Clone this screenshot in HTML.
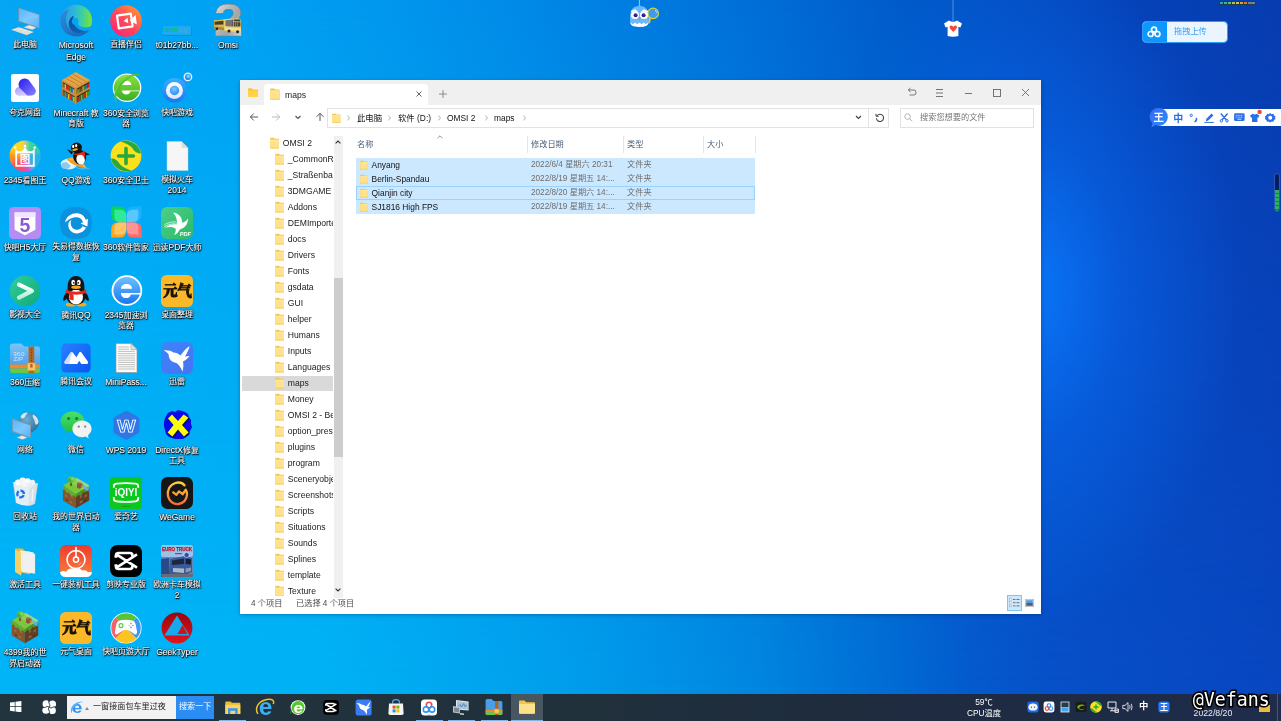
<!DOCTYPE html>
<html lang="zh-CN"><head><meta charset="utf-8"><title>desktop</title>
<style>
*{box-sizing:border-box;margin:0;padding:0}
html,body{width:1281px;height:721px;overflow:hidden}
body{position:relative;font-family:"Liberation Sans","Noto Sans CJK SC",sans-serif;font-size:8px;color:#000;
 background:#0a50c8;}
#bg{position:absolute;left:0;top:0;width:1281px;height:721px;
 background:linear-gradient(90deg,#06a6f4 0%,#00a2f4 18.7%,#0096ee 31%,#008ae8 40.6%,#007ce0 50%,#006ed8 59.3%,#005ecc 68.7%,#0450c4 78%,#0642b8 89%,#083cb0 100%);}
#bg2{position:absolute;left:0;top:0;width:1281px;height:721px;
 background:linear-gradient(90deg,#00b4f7 0%,#00b2f5 25%,#009eec 44%,#0086e0 59%,#006cd4 69.5%,#045acc 75.8%,#0650c8 82%,#0846c0 100%);
 -webkit-mask-image:linear-gradient(180deg,rgba(0,0,0,0) 0%,rgba(0,0,0,.55) 40%,rgba(0,0,0,1) 95%);mask-image:linear-gradient(180deg,rgba(0,0,0,0) 0%,rgba(0,0,0,.55) 40%,rgba(0,0,0,1) 95%);}
#bg3{position:absolute;left:0;top:0;width:1281px;height:721px;
 background:radial-gradient(ellipse 210px 340px at 1030px 290px, rgba(10,124,255,.85), rgba(10,112,250,.4) 45%, rgba(10,100,240,0) 100%);}
#root{position:absolute;left:0;top:0;width:1281px;height:721px;overflow:hidden;opacity:.999}
.abs{position:absolute}
.di{position:absolute;width:60px;text-align:center;color:#fff;font-size:7.95px;line-height:10.5px;-webkit-text-stroke:.1px #fff;
 text-shadow:0 0 .8px rgba(0,0,0,1),0 0 1.2px rgba(0,0,0,.9),0.6px 0.8px 1px rgba(0,0,0,1),0.5px 0.7px 2px rgba(0,0,0,.7);}
.di i{font-style:normal;font-size:8.5px}
.di svg{text-shadow:none;-webkit-text-stroke:0;display:block;margin:0 auto 3.2px;width:32px;height:32px;overflow:visible}
#win{position:absolute;left:240px;top:80px;width:801px;height:534px;background:#fff;
 box-shadow:0 1px 4px rgba(0,0,40,.28);}
#tb{position:absolute;left:0;top:0;width:801px;height:25px;background:#f0f0f0}
#tab{position:absolute;left:24px;top:4px;width:164px;height:21px;background:#fff;border-radius:4px 4px 0 0}
.t{position:absolute;white-space:nowrap;line-height:10px}
.g{color:#6d6d6d}
#task{position:absolute;left:0;top:693px;width:1281px;height:28px}
#taskbg{position:absolute;left:0;top:.8px;width:1281px;height:27.2px;background:linear-gradient(90deg,#22343e 0%,#21313b 42%,#1e2c3e 65%,#1e2b44 82%,#1f2c4b 100%)}
</style></head>
<body>
<div id="root">
<div id="bg"></div><div id="bg2"></div><div id="bg3"></div>
<div class="di" style="left:-5.0px;top:4.9px"><svg viewBox="0 0 32 32" width="32" height="32"><defs><linearGradient id="pcg" x1="0" y1="0" x2="1" y2="1"><stop offset="0" stop-color="#58b6ff"/><stop offset=".5" stop-color="#7cc8ff"/><stop offset="1" stop-color="#58b4fc"/></linearGradient></defs><path d="M14.5 22.2L20.5 20L27.2 22.5L23.4 24.8Z" fill="#ece8e0" stroke="#b8a898" stroke-width=".3"/><path d="M9.4 2.5L30.5 9.4V23.3L9.4 16.5Z" fill="#8e949c"/><path d="M10.1 3.6L29.8 10V22.2L10.1 15.8Z" fill="url(#pcg)"/><path d="M10.1 15.8L29.8 10V12L10.1 15.8Z" fill="#9adcff" opacity=".35"/><path d="M2.3 24.8L9.7 22.2L24.6 27L17.5 30Z" fill="#eeebe6" stroke="#c0b4a8" stroke-width=".3"/><path d="M4.6 24.9L19.6 29.2M7 24L22 28.2M6 25.8L11 23.4M10.4 27L15.4 24.6M14.8 28.4L19.8 26" stroke="#d0c8be" stroke-width=".45"/></svg>此电脑</div>
<div class="di" style="left:46.0px;top:4.9px"><svg viewBox="0 0 32 32" width="32" height="32"><defs><linearGradient id="eg1" x1=".05" y1=".4" x2=".95" y2=".45"><stop offset="0" stop-color="#2a9ae0"/><stop offset=".4" stop-color="#2cb6dc"/><stop offset=".72" stop-color="#3fd0a0"/><stop offset="1" stop-color="#74e23c"/></linearGradient><linearGradient id="eg2" x1="0" y1="0" x2="1" y2="1"><stop offset="0" stop-color="#2a8edc"/><stop offset="1" stop-color="#1262ba"/></linearGradient><linearGradient id="eg3" x1="0" y1="0" x2="1" y2="1"><stop offset="0" stop-color="#0c4c9c"/><stop offset="1" stop-color="#1468bc"/></linearGradient><mask id="egm"><rect x="-2" y="-2" width="36" height="36" fill="#fff"/><circle cx="15.2" cy="16.4" r="3.3" fill="#000"/><path d="M15.4 17C16 21.4 20 24 25 24.2C28 24.2 31 23.4 33.4 21.6" fill="none" stroke="#000" stroke-width="3.4"/></mask></defs><g mask="url(#egm)"><circle cx="16.2" cy="15.6" r="15.9" fill="url(#eg1)"/><path d="M.3 16C.3 10 4 6 9 4.6C4.6 10 5 20 10 24.4C15 28.6 24 28.6 30.6 23.4C27 29 21 31.6 16 31.6C7 31.6 .3 24.6 .3 16Z" fill="url(#eg2)"/><path d="M13.6 10.4C8.4 13 7 20.4 11 25C15.4 29.6 24.4 29 30.6 23.4C25 26 19.6 25 16.4 21.8C13.4 18.8 12.8 14.4 13.6 10.4Z" fill="url(#eg3)"/></g></svg><i>Microsoft</i><br><i>Edge</i></div>
<div class="di" style="left:96.0px;top:4.9px"><svg viewBox="0 0 32 32" width="32" height="32"><defs><linearGradient id="zb" x1=".15" y1=".9" x2=".85" y2=".1"><stop offset="0" stop-color="#ff2470"/><stop offset=".5" stop-color="#ff4a5c"/><stop offset="1" stop-color="#ff9036"/></linearGradient></defs><circle cx="16" cy="16" r="15.8" fill="url(#zb)"/><path d="M7 10.6L20.8 8.6L22.6 21.4L8.8 23.4Z" fill="none" stroke="#fff" stroke-width="2.2" stroke-linejoin="round"/><path d="M25.6 10L26.8 19.4L19.6 15.6Z" fill="#fff"/><path d="M17.6 12.8L18.3 18.2L13.6 16Z" fill="#fff"/></svg>直播伴侣</div>
<div class="di" style="left:147.0px;top:4.9px"><svg viewBox="0 0 32 32" width="32" height="32"><rect x="2.2" y="21" width="28.2" height="9.2" fill="rgba(120,200,250,.22)"/><path d="M2.2 30.4H30.6V21" fill="none" stroke="rgba(20,90,170,.45)" stroke-width=".7"/><text x="3" y="27" font-family="Liberation Sans,sans-serif" font-weight="bold" font-size="5.8" fill="#10c060" textLength="13.6" lengthAdjust="spacingAndGlyphs">360</text><text x="17.2" y="26.8" font-family="Liberation Sans,Noto Sans CJK SC,sans-serif" font-size="4.8" fill="#5aa6d0" textLength="10.6" lengthAdjust="spacingAndGlyphs">导航</text></svg><i>t01b27bb...</i></div>
<div class="di" style="left:198.0px;top:4.9px"><svg viewBox="0 0 32 32" width="32" height="32"><defs><linearGradient id="om" x1="0" y1="0" x2="1" y2="1"><stop offset="0" stop-color="#f0f0f0"/><stop offset=".35" stop-color="#bdbdbd"/><stop offset=".6" stop-color="#a4a4a4"/><stop offset="1" stop-color="#ececec"/></linearGradient></defs><text x="16.6" y="31.4" text-anchor="middle" font-family="Liberation Sans,sans-serif" font-weight="bold" font-size="46.5" fill="url(#om)" stroke="#7a7a7a" stroke-width=".4" textLength="30" lengthAdjust="spacingAndGlyphs">2</text><path d="M2 15.6L12 14.4L13 14L27 13.4L29 14.4V27L27 27.6L13 26L12 25.4L2 23.6Z" fill="#e6cf74"/><path d="M2 15.6L12 14.4V25.4L2 23.6Z" fill="#d8b84a"/><path d="M2.6 16.8L11.4 15.8V19.6L2.6 19.8Z" fill="#4a3c24"/><path d="M13.6 15.2L21 14.8V21.6L13.6 21Z" fill="#5a5a6a"/><path d="M15 15.2V21.2M17 15.1V21.3M19 15V21.4" stroke="#c8b070" stroke-width=".6"/><path d="M21.6 14.6L28.4 14.6V16.4L21.6 16.2Z" fill="#2a4a2a"/><path d="M21.6 17L28.4 17.2V21.6L21.6 21.6Z" fill="#4a4438"/><path d="M23.4 17.1V21.6M25.4 17.1V21.6" stroke="#c8a858" stroke-width=".6"/><path d="M13 22.6L29 23.4V25.6L13 24.4Z" fill="#f2e29a"/><path d="M2 21.4L12 22.6V25.4L2 23.6Z" fill="#a8883a"/><circle cx="17" cy="26" r="1.5" fill="#222"/><circle cx="25.6" cy="26.8" r="1.5" fill="#222"/><circle cx="5" cy="23.8" r="1.2" fill="#222"/></svg><i>Omsi</i></div>
<div class="di" style="left:-5.0px;top:72.4px"><svg viewBox="0 0 32 32" width="32" height="32"><defs><linearGradient id="qk" gradientUnits="userSpaceOnUse" x1="10" y1="8" x2="26" y2="24"><stop offset="0" stop-color="#2a22f0"/><stop offset=".5" stop-color="#5a50fa"/><stop offset="1" stop-color="#8a84ff"/></linearGradient><linearGradient id="qk2" x1="0" y1="0" x2="1" y2="1"><stop offset="0" stop-color="#a49cff"/><stop offset="1" stop-color="#e6e2ff"/></linearGradient></defs><rect x="2" y="2" width="28" height="28" rx="2.2" fill="#fff"/><path d="M10.3 15.1A4.3 4.3 0 0 0 10.3 23.7H22V15.1Z" fill="url(#qk2)"/><path d="M10.2 15.6A6.1 6.1 0 0 1 21 9.8L25.8 16.2A4.5 4.5 0 0 1 22.3 23.6L18.4 23.6Z" fill="url(#qk)"/></svg>夸克网盘</div>
<div class="di" style="left:46.0px;top:72.4px"><svg viewBox="0 0 32 32" width="32" height="32"><path d="M15.8 -.1L29.9 8.1L15.8 15.9L2.1 8.1Z" fill="#e6a648"/><path d="M5.5 6L19.4 14M9 4L22.9 12M12.4 2L26.4 10" stroke="#b87828" stroke-width=".8"/><path d="M2.1 8.1L15.8 15.9V31.4L2.1 23.3Z" fill="#c88a3a"/><path d="M29.9 8.1L15.8 15.9V31.4L29.9 23.3Z" fill="#a8702c"/><path d="M2.9 10.1L15 17V22.6L2.9 15.7Z" fill="#4a2c14"/><path d="M2.9 17.7L15 24.6V30.2L2.9 23.3Z" fill="#4a2c14"/><path d="M29.1 10.1L16.6 17V22.6L29.1 15.7Z" fill="#3a2210"/><path d="M29.1 17.7L16.6 24.6V30.2L29.1 23.3Z" fill="#3a2210"/><path d="M3.6 11.4V16.4" stroke="#2e8a4a" stroke-width="1.6"/><path d="M5.3 12.3V17.3" stroke="#d8c030" stroke-width="1.6"/><path d="M7.0 13.3V18.3" stroke="#e02a22" stroke-width="1.6"/><path d="M8.8 14.3V19.3" stroke="#e02a22" stroke-width="1.6"/><path d="M10.5 15.3V20.3" stroke="#2eaa4a" stroke-width="1.6"/><path d="M12.2 16.2V21.2" stroke="#3a6ad0" stroke-width="1.6"/><path d="M13.9 17.2V22.2" stroke="#d8c030" stroke-width="1.6"/><path d="M3.6 19.0V24.0" stroke="#e02a22" stroke-width="1.6"/><path d="M5.3 19.9V24.9" stroke="#2eaa4a" stroke-width="1.6"/><path d="M7.0 20.9V25.9" stroke="#3a6ad0" stroke-width="1.6"/><path d="M8.8 21.9V26.9" stroke="#d8c030" stroke-width="1.6"/><path d="M10.5 22.9V27.9" stroke="#e02a22" stroke-width="1.6"/><path d="M12.2 23.8V28.8" stroke="#2e8a4a" stroke-width="1.6"/><path d="M13.9 24.8V29.8" stroke="#d8c030" stroke-width="1.6"/><path d="M28.3 11.4V16.4" stroke="#c82a22" stroke-width="1.6"/><path d="M26.6 12.4V17.4" stroke="#2e6ac0" stroke-width="1.6"/><path d="M24.9 13.4V18.4" stroke="#2e9a3a" stroke-width="1.6"/><path d="M23.1 14.3V19.3" stroke="#b8a828" stroke-width="1.6"/><path d="M21.4 15.3V20.3" stroke="#c82a22" stroke-width="1.6"/><path d="M19.7 16.3V21.3" stroke="#2e8a3a" stroke-width="1.6"/><path d="M18.0 17.3V22.3" stroke="#88a828" stroke-width="1.6"/><path d="M28.3 19.0V24.0" stroke="#2e9a3a" stroke-width="1.6"/><path d="M26.6 20.0V25.0" stroke="#b8a828" stroke-width="1.6"/><path d="M24.9 21.0V26.0" stroke="#c82a22" stroke-width="1.6"/><path d="M23.1 21.9V26.9" stroke="#2e8a3a" stroke-width="1.6"/><path d="M21.4 22.9V27.9" stroke="#88a828" stroke-width="1.6"/><path d="M19.7 23.9V28.9" stroke="#2e7a3a" stroke-width="1.6"/><path d="M18.0 24.9V29.9" stroke="#c82a22" stroke-width="1.6"/><path d="M2.1 15.7L15.8 23.5L29.9 15.7" fill="none" stroke="#c88a3a" stroke-width="1.5"/><path d="M15.8 15.9V31.4" stroke="#d8963e" stroke-width="1.2"/><path d="M2.1 8.1L15.8 15.9L29.9 8.1" fill="none" stroke="#d8963e" stroke-width="1.4"/></svg><i>Minecraft</i> 教<br>育版</div>
<div class="di" style="left:96.0px;top:72.4px"><svg viewBox="0 0 32 32" width="32" height="32"><defs><linearGradient id="se" x1="0" y1="0" x2="0" y2="1"><stop offset="0" stop-color="#8ee240"/><stop offset="1" stop-color="#3aae22"/></linearGradient></defs><circle cx="17" cy="15.7" r="14.3" fill="#fff"/><circle cx="17" cy="15.7" r="13.1" fill="url(#se)"/><path d="M12 13C12 10.2 14 8.8 16.6 8.8C19.4 8.8 21.3 10.4 21.3 13Z" fill="#fff"/><path d="M11.7 18.4H29.6V19.3H20.4C20 21.4 18.4 22.6 16.4 22.6C14 22.6 12.2 21 11.9 19.3Z" fill="#fff"/><path d="M6.4 30.8C1 24 7 7.6 22 2.6C26 1.2 30 1.4 30.4 4.2C28 2.6 25 3 22 4.6C11 10.4 5 22 6.4 30.8Z" fill="#4cc42c"/><path d="M5.6 20C8 12 14 6 22 3.4" fill="none" stroke="#9ae860" stroke-width=".7" opacity=".8"/></svg><i>360</i>安全浏览<br>器</div>
<div class="di" style="left:147.0px;top:72.4px"><svg viewBox="0 0 32 32" width="32" height="32"><defs><linearGradient id="kb1" x1="0" y1="0" x2="0" y2="1"><stop offset="0" stop-color="#3cacff"/><stop offset="1" stop-color="#1a78ee"/></linearGradient><linearGradient id="kb2" x1="0" y1="0" x2="0" y2="1"><stop offset="0" stop-color="#4ab4ff"/><stop offset="1" stop-color="#2288f0"/></linearGradient><radialGradient id="kb3" cx=".45" cy=".35" r=".7"><stop offset="0" stop-color="#7cc8ff"/><stop offset="1" stop-color="#2488f4"/></radialGradient><linearGradient id="kb4" x1="0" y1="0" x2="0" y2="1"><stop offset="0" stop-color="#ffffff"/><stop offset="1" stop-color="#dce6f0"/></linearGradient></defs><path d="M20.4 8.6L24.4 5L27.4 8.4L24 12.6Z" fill="#2a94fa"/><circle cx="26.9" cy="4.9" r="4.4" fill="#eaf4fc"/><circle cx="26.9" cy="4.9" r="3.1" fill="url(#kb2)"/><circle cx="27.3" cy="4.4" r="1.3" fill="#8ad4ff"/><circle cx="13.4" cy="18.3" r="12.3" fill="url(#kb1)"/><circle cx="13.4" cy="18.6" r="8.5" fill="url(#kb4)"/><circle cx="13.5" cy="18.5" r="4.7" fill="url(#kb3)"/></svg>快吧游戏</div>
<div class="di" style="left:-5.0px;top:139.8px"><svg viewBox="0 0 32 32" width="32" height="32"><defs><clipPath id="pvc"><circle cx="16" cy="16" r="15.6"/></clipPath><filter id="pvb" x="-20%" y="-20%" width="140%" height="140%"><feGaussianBlur stdDeviation="2.6"/></filter></defs><g clip-path="url(#pvc)"><g filter="url(#pvb)"><rect x="-4" y="-4" width="40" height="40" fill="#ffd21e"/><path d="M16 16L16 -6L40 -6L40 16Z" fill="#3ed0a0"/><path d="M16 16L40 10L40 34L26 40Z" fill="#28b0ec"/><path d="M16 16L28 40L14 40Z" fill="#c850d0"/><path d="M16 16L14 40L-6 40L-6 26Z" fill="#ff4660"/><path d="M16 16L-6 28L-6 10Z" fill="#ff8a1e"/><path d="M16 16L-6 10L-6 -6L16 -6Z" fill="#ffd41e"/></g></g><path d="M6.4 8.4L9.2 11.4H13L16 7L19 11.4H22.8L25.6 8.4V12.6H6.4Z" fill="#fff"/><circle cx="6.4" cy="7.6" r="1.2" fill="#fff"/><circle cx="16" cy="6" r="1.3" fill="#fff"/><circle cx="25.6" cy="7.6" r="1.2" fill="#fff"/><rect x="7.2" y="12.4" width="17.6" height="13.4" fill="none" stroke="#fff" stroke-width="1.8"/><text x="16" y="23.4" text-anchor="middle" font-family="Noto Sans CJK SC,sans-serif" font-weight="bold" font-size="10.5" fill="#fff">图</text></svg><i>2345</i>看图王</div>
<div class="di" style="left:46.0px;top:139.8px"><svg viewBox="0 0 32 32" width="32" height="32"><ellipse cx="9" cy="24" rx="8.4" ry="5.4" fill="#dff1fb"/><ellipse cx="5.6" cy="25.6" rx="4.6" ry="3.4" fill="#8ccaf0"/><ellipse cx="11.6" cy="21.6" rx="4" ry="3.2" fill="#f4fbff"/><path d="M7 19.6C12 14.6 20 18 27.6 28.6C19 27.6 11 24.6 7 19.6Z" fill="#f0a028"/><path d="M9.6 19.8C14 17 20 20.6 25 27" fill="none" stroke="#ffd070" stroke-width="1"/><path d="M14 26.4C20 30.8 28 30 31.4 27.6C27 28.8 20 28.6 14 26.4Z" fill="#58b4ec"/><ellipse cx="19.6" cy="17" rx="6.4" ry="7.6" fill="#141414" transform="rotate(-14 19.6 17)"/><ellipse cx="20.6" cy="19.4" rx="4.2" ry="5.2" fill="#fff" transform="rotate(-14 20.6 19.4)"/><ellipse cx="16.4" cy="7.6" rx="5.6" ry="5" fill="#141414" transform="rotate(-14 16.4 7.6)"/><path d="M11.6 12.4C15 15 21.6 13.4 24 10.6L27.6 15.6L24.6 15.2L25 17.6L21.6 14.4C18 15.8 14 15.4 11.6 12.4Z" fill="#e8281e"/><path d="M7 9L13 12L11.4 14.4Z" fill="#141414"/><path d="M24.6 12L30 14.6L25.4 15.4Z" fill="#141414"/><ellipse cx="13.2" cy="6.4" rx="1.1" ry="1.6" fill="#fff"/><ellipse cx="16.2" cy="5.6" rx="1.1" ry="1.6" fill="#fff"/><ellipse cx="15" cy="9.6" rx="3" ry="1.2" fill="#f6a81e" transform="rotate(-10 15 9.6)"/></svg><i>QQ</i>游戏</div>
<div class="di" style="left:96.0px;top:139.8px"><svg viewBox="0 0 32 32" width="32" height="32"><circle cx="16" cy="16" r="15.4" fill="#fbe01e"/><path d="M10.6 1.6C19 -1.4 29.4 4 31 13.4C28.4 14 25 12.4 22.6 8.6C20.4 5.2 15 3 10.6 1.6Z" fill="#2aa83c"/><path d="M21.4 30.4C13 33.4 2.6 28 1 18.6C3.6 18 7 19.6 9.4 23.4C11.6 26.8 17 29 21.4 30.4Z" fill="#2aa83c"/><path d="M16 8.6V23.4M8.6 16H23.4" stroke="#2aa83c" stroke-width="3.6" stroke-linecap="round"/></svg><i>360</i>安全卫士</div>
<div class="di" style="left:147.0px;top:139.8px"><svg viewBox="0 0 32 32" width="32" height="32"><path d="M6 1.5H20.6L27 8V30.5H6Z" fill="#f6f6f6" stroke="#d0d0d0" stroke-width=".5"/><path d="M20.6 1.5V8H27Z" fill="#dcdcdc"/></svg>模拟火车<br><i>2014</i></div>
<div class="di" style="left:-5.0px;top:207.3px"><svg viewBox="0 0 32 32" width="32" height="32"><rect x="0" y="0" width="32" height="32" rx="4.5" fill="#b58cf4"/><path d="M5.6 5.4H26.4V22.8L16 28.2L5.6 22.8Z" fill="#fff"/><path d="M5.6 5.4H26.4V10H5.6Z" fill="#efe6ff"/><text x="16" y="24.6" text-anchor="middle" font-family="Liberation Sans,sans-serif" font-weight="bold" font-size="19.5" fill="#8a5ad6">5</text></svg>快吧<i>H5</i>大厅</div>
<div class="di" style="left:46.0px;top:207.3px"><svg viewBox="0 0 32 32" width="32" height="32"><path d="M16 0C27 0 32 5 32 16S27 32 16 32S0 27 0 16S5 0 16 0Z" fill="#0c92dc"/><path d="M5 15.6C6 9.6 11 6.2 16.4 6.2C21 6.2 24.6 8.8 25.8 12.8L28 12L27.4 19.4L20.6 16.4L23 15.2C22 12 19.6 10.2 16.4 10.2C11.6 10.2 8.6 12.6 5 15.6Z" fill="#fff"/><path d="M8.4 16.4C9 14.6 10 13.6 11.6 12.8C10.8 14 10.6 15.4 10.8 17C11.2 20.4 13.6 22.8 17 22.8C19.6 22.8 21.6 21.4 22.4 19.2L26 20.6C24.6 24 21.2 26.4 17 26.4C11.6 26.4 7.6 22 8.4 16.4Z" fill="#fff"/></svg>失易得数据恢<br>复</div>
<div class="di" style="left:96.0px;top:207.3px"><svg viewBox="0 0 32 32" width="32" height="32"><path d="M1.2 -.4H9.4Q16.2 -.4 16.2 7V15H8Q1.2 15 1.2 8Z" fill="#0ed25c"/><path d="M4.4 2.8H10Q16.2 2.8 16.2 9V15H10Q4.4 15 4.4 9.4Z" fill="#2deb96"/><path d="M31.6 -.4H23.4Q16.6 -.4 16.6 7V15H24.8Q31.6 15 31.6 8Z" fill="#18b0ff"/><path d="M28.4 2.8H22.8Q16.6 2.8 16.6 9V15H22.8Q28.4 15 28.4 9.4Z" fill="#58c8ff"/><path d="M1.2 30.6H9.4Q16.2 30.6 16.2 23.2V15.4H8Q1.2 15.4 1.2 22.2Z" fill="#ffa61e"/><path d="M4.4 27.4H10Q16.2 27.4 16.2 21.4V15.4H10Q4.4 15.4 4.4 21Z" fill="#ffc466"/><path d="M31.6 30.6H23.4Q16.6 30.6 16.6 23.2V15.4H24.8Q31.6 15.4 31.6 22.2Z" fill="#ff6a6a"/><path d="M28.4 27.4H22.8Q16.6 27.4 16.6 21.4V15.4H22.8Q28.4 15.4 28.4 21Z" fill="#ff9494"/></svg><i>360</i>软件管家</div>
<div class="di" style="left:147.0px;top:207.3px"><svg viewBox="0 0 32 32" width="32" height="32"><defs><linearGradient id="xd" x1="0" y1="0" x2="1" y2="1"><stop offset="0" stop-color="#4ad088"/><stop offset="1" stop-color="#2eb86a"/></linearGradient></defs><rect x="0" y="0" width="32" height="32" rx="6" fill="url(#xd)"/><path d="M12 5.6C18.6 6.6 21.4 11 21 15.6C23.6 15.4 25.6 14 27 11.6C27 17.6 23.6 21.6 18.8 22.4C17.6 25 15.6 27 13 28C14.6 25.6 15 23.6 14.6 21.6C11.6 20 9 19.4 4 21C8 17.6 12 17 15.4 17.4C16.6 13.6 15.6 9.6 12 5.6Z" fill="#fff"/><path d="M3.6 17.6C8 15.2 11.6 14.6 15 15M3 20C7 17.4 10.6 16.6 14.6 16.8" stroke="#fff" stroke-width=".7" fill="none"/><text x="24.4" y="28.8" text-anchor="middle" font-family="Liberation Sans,sans-serif" font-style="italic" font-weight="bold" font-size="5.6" fill="#fff">PDF</text></svg>迅读<i>PDF</i>大师</div>
<div class="di" style="left:-5.0px;top:274.7px"><svg viewBox="0 0 32 32" width="32" height="32"><defs><linearGradient id="ys" x1="0" y1="0" x2="1" y2="1"><stop offset="0" stop-color="#2ecf9c"/><stop offset="1" stop-color="#12a878"/></linearGradient><linearGradient id="ys2" x1="0" y1="0" x2="0" y2="1"><stop offset="0" stop-color="#ffffff"/><stop offset="1" stop-color="#b8f0d8"/></linearGradient></defs><circle cx="16" cy="16" r="15.2" fill="url(#ys)"/><path d="M10 9.6L23 15.8L10 22.6" fill="none" stroke="url(#ys2)" stroke-width="4.2" stroke-linecap="round" stroke-linejoin="round"/></svg>影视大全</div>
<div class="di" style="left:46.0px;top:274.7px"><svg viewBox="0 0 32 32" width="32" height="32"><path d="M6 18C3.6 21 2.6 24.6 3.6 26C5 26 7 23.6 8 21.6Z" fill="#141414"/><path d="M26 18C28.4 21 29.4 24.6 28.4 26C27 26 25 23.6 24 21.6Z" fill="#141414"/><ellipse cx="10.6" cy="29.4" rx="5" ry="2" fill="#f6a81e"/><ellipse cx="21.4" cy="29.4" rx="5" ry="2" fill="#f6a81e"/><ellipse cx="16" cy="20.6" rx="10" ry="9.4" fill="#141414"/><ellipse cx="16" cy="22" rx="7" ry="7.4" fill="#fff"/><path d="M7.6 12C7.6 5 11 1 16 1S24.4 5 24.4 12V15H7.6Z" fill="#141414"/><path d="M6 14.4C12 17.4 20 17.4 26 14.4L26.6 17.6C20 20.6 12 20.6 5.4 17.6Z" fill="#e8281e"/><path d="M9.6 18.6L13.6 19.6V25.4L9.6 24.6Z" fill="#e8281e"/><ellipse cx="13.2" cy="7.4" rx="1.9" ry="2.7" fill="#fff"/><ellipse cx="18.8" cy="7.4" rx="1.9" ry="2.7" fill="#fff"/><circle cx="13.8" cy="7.8" r=".9" fill="#141414"/><circle cx="18.2" cy="7.8" r=".9" fill="#141414"/><ellipse cx="16" cy="12.2" rx="4.8" ry="1.7" fill="#f6a81e"/></svg>腾讯<i>QQ</i></div>
<div class="di" style="left:96.0px;top:274.7px"><svg viewBox="0 0 32 32" width="32" height="32"><defs><linearGradient id="b2" x1="0" y1="0" x2="0" y2="1"><stop offset="0" stop-color="#6cc0ff"/><stop offset="1" stop-color="#1a78ee"/></linearGradient></defs><circle cx="16.9" cy="15.5" r="15.3" fill="#fff"/><circle cx="16.9" cy="15.5" r="13.5" fill="url(#b2)"/><path d="M11 13.8C11 10.6 13.4 9 16.6 9C19.8 9 22.1 10.8 22.1 13.8Z" fill="#fff"/><path d="M11 17.9H30.4V19.4H20.8C20.4 21.8 18.6 23.1 16.2 23.1C13.6 23.1 11.6 21.6 11.1 19.4Z" fill="#fff"/></svg><i>2345</i>加速浏<br>览器</div>
<div class="di" style="left:147.0px;top:274.7px"><svg viewBox="0 0 32 32" width="32" height="32"><rect x="0" y="0" width="32" height="32" rx="5.5" fill="#fbb92a"/><text x="16.4" y="21.2" text-anchor="middle" font-family="Noto Serif CJK SC,Noto Sans CJK SC,serif" font-weight="900" font-size="14.6" fill="#1c1408" stroke="#1c1408" stroke-width=".9" textLength="28.4" lengthAdjust="spacingAndGlyphs">元气</text></svg>桌面整理</div>
<div class="di" style="left:-5.0px;top:342.2px"><svg viewBox="0 0 32 32" width="32" height="32"><defs><linearGradient id="zp" x1="0" y1="0" x2="0" y2="1"><stop offset="0" stop-color="#7cc4f6"/><stop offset="1" stop-color="#3e94e6"/></linearGradient></defs><path d="M1 4Q1 1.4 3.6 1.4H12L15.4 4.6H28.6Q31 4.6 31 7V29Q31 31 28.6 31H3.6Q1 31 1 29Z" fill="url(#zp)"/><path d="M1 22.6H31V26.4H1Z" fill="#f58a1e"/><path d="M1 26.4H31V29Q31 31 28.6 31H3.6Q1 31 1 29Z" fill="#6cc83c"/><rect x="19.6" y="4.6" width="5.6" height="26.4" fill="#b4641e"/><path d="M22.4 7V21" stroke="#7a3c0e" stroke-width="1" stroke-dasharray="1.2 1.6"/><rect x="18.4" y="21" width="8" height="7.6" rx="1" fill="#f6c86a" stroke="#e09a3a" stroke-width=".8"/><rect x="21.2" y="22" width="2.4" height="3.6" fill="#b4641e"/><text x="4" y="13.6" font-family="Liberation Sans,sans-serif" font-size="5.2" fill="#cfe6fa" textLength="11.6" lengthAdjust="spacingAndGlyphs">360</text><text x="4.6" y="19.4" font-family="Liberation Sans,sans-serif" font-size="5.2" fill="#cfe6fa" textLength="9.6" lengthAdjust="spacingAndGlyphs">ZIP</text></svg><i>360</i>压缩</div>
<div class="di" style="left:46.0px;top:342.2px"><svg viewBox="0 0 32 32" width="32" height="32"><defs><linearGradient id="tm" x1="0" y1="0" x2="1" y2="1"><stop offset="0" stop-color="#2a80ff"/><stop offset="1" stop-color="#0a56f0"/></linearGradient></defs><rect x="1.4" y="1.4" width="29.2" height="29.2" rx="4.5" fill="url(#tm)"/><path d="M4.4 19.6L10.6 10.2Q11.4 9.2 12.4 10.2L16.6 15.4L12.4 22H6Q3.6 22 4.4 19.6Z" fill="#cfe0ff"/><path d="M12.4 22L19.4 10.2Q20.2 9.2 21.2 10.2L28 19.8Q28.6 22 26.4 22H21.4L19.2 18.8L17.2 22Z" fill="#fff"/><path d="M12.4 10.2L17.4 17L14.6 22H12.4L9 22Z" fill="#fff"/></svg>腾讯会议</div>
<div class="di" style="left:96.0px;top:342.2px"><svg viewBox="0 0 32 32" width="32" height="32"><path d="M6 1.5H21L27 7.5V30.5H6Z" fill="#fbfbfb" stroke="#9a9a9a" stroke-width=".7"/><path d="M21 1.5V7.5H27Z" fill="#e2e2e2" stroke="#9a9a9a" stroke-width=".6"/><path d="M8 5H19M8 7.2H19M8 9.4H25M8 11.6H25M8 13.8H25M8 16H25M8 18.2H25M8 20.4H25M8 22.6H25M8 24.8H25M8 27H25" stroke="#a8a8a8" stroke-width=".7"/></svg><i>MiniPass...</i></div>
<div class="di" style="left:147.0px;top:342.2px"><svg viewBox="0 0 32 32" width="32" height="32"><defs><linearGradient id="xl" x1="0" y1="0" x2="1" y2="1"><stop offset="0" stop-color="#3a86fa"/><stop offset="1" stop-color="#4a72f2"/></linearGradient></defs><rect x="0" y="0" width="32" height="32" rx="6" fill="url(#xl)"/><path d="M2.6 8.4C6.6 8 10 8.6 12.4 10.6C15 10.6 17.6 11.6 19.4 13.6C22 10 25 6.4 28.6 4C27.6 8 26 11.4 24 14.4L28.6 14C26.6 16.6 24.6 18.4 22 19.6C22.6 23 22.6 26.4 21.4 29.6C20 25.6 18 22.8 15.4 21C10.6 20.4 7.6 17 7.6 12.6C6.6 10.6 5 9.4 2.6 8.4Z" fill="#fff"/></svg>迅雷</div>
<div class="di" style="left:-5.0px;top:409.7px"><svg viewBox="0 0 32 32" width="32" height="32"><defs><radialGradient id="ng" cx=".4" cy=".35" r=".75"><stop offset="0" stop-color="#6ab0d4"/><stop offset="1" stop-color="#2a6a9a"/></radialGradient><linearGradient id="ns" x1="0" y1="0" x2="1" y2="1"><stop offset="0" stop-color="#58b6ff"/><stop offset=".5" stop-color="#7cc8ff"/><stop offset="1" stop-color="#58b4fc"/></linearGradient></defs><circle cx="19.7" cy="12.4" r="10.2" fill="url(#ng)"/><path d="M11.6 6.4C13 3.6 16 2.4 18.6 2.6C18 4.4 16.6 5 16 7C14.6 8.6 12.4 9.4 11.6 6.4Z" fill="#e4eef2" opacity=".9"/><path d="M24 4.4C27 5.6 29.4 8.6 29.6 12C29 14 28 15 26.6 14.6C25.6 12.6 25.8 10 24.6 8.4C23.6 7 23.4 5.6 24 4.4Z" fill="#e4eef2" opacity=".9"/><path d="M8 27.4L13 25.6L18.3 27.6L13.4 29.6Z" fill="#ece8e0" stroke="#b8a898" stroke-width=".3"/><path d="M3.1 8.6L21.9 14.8V28L3.1 21.9Z" fill="#8e949c"/><path d="M3.8 9.7L21.2 15.4V26.9L3.8 20.9Z" fill="url(#ns)"/></svg>网络</div>
<div class="di" style="left:46.0px;top:409.7px"><svg viewBox="0 0 32 32" width="32" height="32"><defs><linearGradient id="wc" x1="0" y1="0" x2="0" y2="1"><stop offset="0" stop-color="#4ae06a"/><stop offset="1" stop-color="#1ebc46"/></linearGradient></defs><path d="M12.6 1.6C19.4 1.6 24.6 6 24.6 11.6C24.6 17.2 19.4 21.6 12.6 21.6C11 21.6 9.6 21.4 8.2 21L4.6 23.6L5.4 19.4C2.4 17.6 .6 14.8 .6 11.6C.6 6 5.8 1.6 12.6 1.6Z" fill="url(#wc)"/><circle cx="8.6" cy="8.6" r="1.5" fill="#1a7a2e"/><circle cx="16.6" cy="8.6" r="1.5" fill="#1a7a2e"/><path d="M22 10.6C27.4 10.6 31.6 14.2 31.6 18.8C31.6 21.4 30.2 23.6 28 25.2L28.6 28.6L25.6 26.6C24.4 27 23.2 27.2 22 27.2C16.6 27.2 12.4 23.4 12.4 18.8C12.4 14.2 16.6 10.6 22 10.6Z" fill="#f2f2f2"/><circle cx="18.8" cy="16.6" r="1.2" fill="#8a8a8a"/><circle cx="25.2" cy="16.6" r="1.2" fill="#8a8a8a"/></svg>微信</div>
<div class="di" style="left:96.0px;top:409.7px"><svg viewBox="0 0 32 32" width="32" height="32"><path d="M16.4 .9Q17.4 .9 18.3 1.4L28 7Q29.4 7.8 29.4 9.4V21Q29.4 22.6 28 23.4L18.3 29Q16.4 30 14.5 29L4.8 23.4Q3.4 22.6 3.4 21V9.4Q3.4 7.8 4.8 7L14.5 1.4Q15.4 .9 16.4 .9Z" fill="#3076e6"/><text x="16.5" y="22" text-anchor="middle" font-family="Liberation Sans,sans-serif" font-weight="bold" font-size="16.6" fill="none" stroke="#fff" stroke-width=".75" textLength="18.4" lengthAdjust="spacingAndGlyphs">W</text></svg><i>WPS 2019</i></div>
<div class="di" style="left:147.0px;top:409.7px"><svg viewBox="0 0 32 32" width="32" height="32"><path d="M7 3L11 1L14 2L17 0L21 1L24 2L27 4L28 7L30 10L30 14L31 17L29 21L28 25L25 27L22 29L18 29L14 29L11 28L8 27L5 24L4 20L3 16L3 12L4 8Z" fill="#0808e8"/><path d="M7 8.4L11 4.4L17 11L22.6 4.4L27.4 7.8L21 15L27.6 22.4L23 26.6L17 19.6L11.4 26.6L6.6 22.6L12.6 15Z" fill="#101010" transform="translate(.9 .9)"/><path d="M7 8.4L11 4.4L17 11L22.6 4.4L27.4 7.8L21 15L27.6 22.4L23 26.6L17 19.6L11.4 26.6L6.6 22.6L12.6 15Z" fill="#fcfc10"/></svg><i>DirectX</i>修复<br>工具</div>
<div class="di" style="left:-5.0px;top:477.1px"><svg viewBox="0 0 32 32" width="32" height="32"><path d="M4.2 5L28.6 6.4L25.7 26.8Q17.5 31 7.1 26Z" fill="#eef2f6" opacity=".95"/><path d="M21 6L28.6 6.4L25.7 26.8Q22.6 28.6 19.6 29Z" fill="#d2dce6" opacity=".75"/><circle cx="9" cy="5.4" r="3" fill="#fafbfc"/><circle cx="13.6" cy="3.8" r="3.4" fill="#f2f4f6"/><circle cx="18.6" cy="4.4" r="3.2" fill="#fdfdfd"/><circle cx="23.4" cy="5.6" r="2.8" fill="#eef1f4"/><circle cx="16" cy="7" r="3" fill="#f6f7f9"/><circle cx="21" cy="8.4" r="2.4" fill="#e8ecf0"/><path d="M4.2 5L7.1 26M28.6 6.4L25.7 26.8" stroke="#c4d2de" stroke-width=".5" fill="none"/><circle cx="11.6" cy="17" r="3.3" fill="none" stroke="#1a6ee6" stroke-width="2.3" stroke-dasharray="5.2 1.7" transform="rotate(20 11.6 17)"/><path d="M24 12L23 24" stroke="#fff" stroke-width="1.2" opacity=".7"/></svg>回收站</div>
<div class="di" style="left:46.0px;top:477.1px"><svg viewBox="0 0 32 32" width="32" height="32"><path d="M2.9 8.6L15.8 17.2V31.2L2.9 23.5Z" fill="#86552f"/><path d="M29.2 8.6L15.8 17.2V31.2L29.2 23.5Z" fill="#633e22"/><path d="M5 17L7.4 18.4V20.6L5 19.2ZM9.6 23.4L12.2 24.8V27L9.6 25.6ZM11 18.6L13 19.8V21.4L11 20.2ZM19.6 24.6L22.4 23V25.2L19.6 26.8ZM24.6 18.4L27 17V19.2L24.6 20.6ZM20 19.6L22 18.4V20L20 21.2Z" fill="#a0734a" opacity=".75"/><path d="M6 22L8 23V24.6L6 23.6ZM24 23.4L26 22.2V23.8L24 25Z" fill="#4a2e18" opacity=".7"/><path d="M15.8 .8L29.2 8.6L15.8 17.2L2.9 8.6Z" fill="#7cc63e"/><path d="M15.8 .8L29.2 8.6L22.6 12.8L9.2 4.8Z" fill="#8ed24a"/><path d="M2.9 8.6L15.8 17.2V20.4L13.6 18.2L11.4 19.6L9 15.6L6.6 16L4.6 12.6L2.9 13Z" fill="#62ac34"/><path d="M29.2 8.6L15.8 17.2V20.4L18.4 18L21 19L23.4 15L26 15.6L27.6 12.2L29.2 12.8Z" fill="#4e9429"/><path d="M10.2 4.6H12V9H10.2Z" fill="#7a5030"/><circle cx="11" cy="2.6" r="3.3" fill="#5cc04a"/><circle cx="9.6" cy="3.6" r="2" fill="#4aae3c"/><circle cx="12.6" cy="1.8" r="1.8" fill="#7ad860"/><path d="M17 6.2L20.4 4.8L22.6 6.2V10.4L19.2 11.8L17 10.4Z" fill="#8a5638"/><path d="M17 6.2L20.4 4.8L22.6 6.2L19.2 7.6Z" fill="#a86e48"/><path d="M21.4 8.4H22.4V10.8H21.4Z" fill="#f4b818"/><path d="M22.6 7.6L28.6 11V14.6L24.4 12.2Z" fill="#5cb8f0" opacity=".9"/><path d="M16.6 1.2L29.2 8.6V11L16.6 3.6Z" fill="#a8dcf4" opacity=".55"/><path d="M16.6 1.2L29.2 8.6" stroke="#9ad25a" stroke-width=".8"/></svg>我的世界启动<br>器</div>
<div class="di" style="left:96.0px;top:477.1px"><svg viewBox="0 0 32 32" width="32" height="32"><rect x="0" y="0" width="32" height="32" rx="3.2" fill="#0cc81e"/><path d="M3.8 10.8V9.4Q3.8 6.8 6.4 6.6Q16 5.6 25.6 6.6Q28.2 6.8 28.2 9.4V10.8M3.8 20V21.6Q3.8 24.2 6.4 24.4Q16 25.4 25.6 24.4Q28.2 24.2 28.2 21.6V20" fill="none" stroke="#fff" stroke-width="1.8"/><text x="16" y="19.4" text-anchor="middle" font-family="Liberation Sans,sans-serif" font-weight="bold" font-size="10.6" fill="#fff" textLength="22.6" lengthAdjust="spacingAndGlyphs">iQIYI</text><path d="M12 29.4H20" stroke="#0a9a18" stroke-width=".8"/></svg>爱奇艺</div>
<div class="di" style="left:147.0px;top:477.1px"><svg viewBox="0 0 32 32" width="32" height="32"><defs><linearGradient id="wg" x1="0" y1="0" x2="0" y2="1"><stop offset="0" stop-color="#fcd23a"/><stop offset="1" stop-color="#f86a3a"/></linearGradient></defs><rect x="0" y="0" width="32" height="32" rx="6.5" fill="#161616"/><path d="M23.6 8.4C21.4 5.8 17.8 5 14.4 6C8.6 7.8 6 13.4 7 19C8 24.4 12.6 27.6 17.6 27C22.6 26.4 26 22.4 26 17.6C26 15.6 25.6 14 24.8 12.8L21.6 17.2L18 14.4L15.4 17.8L12.2 15.4" fill="none" stroke="url(#wg)" stroke-width="2.3" stroke-linecap="round" stroke-linejoin="round"/></svg><i>WeGame</i></div>
<div class="di" style="left:-5.0px;top:544.6px"><svg viewBox="0 0 32 32" width="32" height="32"><path d="M6 3.6H14L16 6H21V29.6L6 26Z" fill="#e8b83a"/><path d="M11 5.6L24.6 7.6V27.6L11 26Z" fill="#fafafa"/><path d="M13 6.6L26 9V28.6L13 27Z" fill="#f0f0f0" stroke="#dcdcdc" stroke-width=".3"/><path d="M6 5.6L12 7.4V30.4L6 27Z" fill="#f6d064"/><path d="M6 5.6L12 7.4V30.4" fill="none" stroke="#fbe08a" stroke-width=".5"/></svg>激活工具</div>
<div class="di" style="left:46.0px;top:544.6px"><svg viewBox="0 0 32 32" width="32" height="32"><defs><linearGradient id="yj" x1="0" y1="0" x2="0" y2="1"><stop offset="0" stop-color="#ee3a2e"/><stop offset="1" stop-color="#f8823e"/></linearGradient></defs><rect x="0" y="0" width="32" height="32" rx="6" fill="url(#yj)"/><circle cx="16" cy="14.6" r="9" fill="none" stroke="#fff" stroke-width="1.6"/><path d="M16 1.6V12" stroke="url(#yj)" stroke-width="4.4"/><path d="M16 2.6V12" stroke="#fff" stroke-width="1.6" stroke-linecap="round"/><circle cx="16" cy="14.6" r="2.6" fill="none" stroke="#fff" stroke-width="1.5"/><path d="M19 20L21 17.6" stroke="#fff" stroke-width=".8" opacity=".7"/><path d="M0 27.6C2 25.6 4.6 25.6 6 27C7.6 23.6 11.6 22.6 14 24.6C16 22.6 20 22.6 22 25.6C24.6 24.6 27 25.6 28 27.4C29.6 26.6 31 27 32 27.6V26Q32 32 26 32H6Q0 32 0 26Z" fill="#fff"/></svg>一键装机工具</div>
<div class="di" style="left:96.0px;top:544.6px"><svg viewBox="0 0 32 32" width="32" height="32"><rect x="0" y="0" width="32" height="32" rx="7.5" fill="#000"/><path d="M27 9.4L8.4 21.4Q6 23 6 20.6V19.4M27 22.6L8.4 10.6Q6 9 6 11.4V12.6" fill="none" stroke="#fff" stroke-width="2.7" stroke-linejoin="round"/><path d="M6 12.6V10.4Q6 8 8.4 8H20Q22.4 8 22.4 10.4V11.6M6 19.4V21.6Q6 24 8.4 24H20Q22.4 24 22.4 21.6V20.4" fill="none" stroke="#fff" stroke-width="2.7"/></svg>剪映专业版</div>
<div class="di" style="left:147.0px;top:544.6px"><svg viewBox="0 0 32 32" width="32" height="32"><rect x="0" y="0" width="32" height="32" rx="2" fill="#5a8ac8"/><rect x="0" y="0" width="32" height="12" rx="2" fill="#9cc0e8"/><path d="M0 14L8 13L9 32H0Z" fill="#2a4a8a"/><path d="M9 14L24 11L31 13V27L24 30L9 29Z" fill="#3a5a9c"/><path d="M11 15.6L23 13.4V19L11 20Z" fill="#1c2840"/><path d="M24.6 13.6L30 14.6V19.6L24.6 19Z" fill="#141e34"/><path d="M12 23L23 23.6V28L12 27Z" fill="#a8b8c8"/><path d="M24.6 23.6L30 22.6V26L24.6 27.6Z" fill="#8a9ab0"/><path d="M0 29H32V30Q32 32 30 32H2Q0 32 0 30Z" fill="#6a6a72"/><text x="16" y="6.4" text-anchor="middle" font-family="Liberation Sans,sans-serif" font-weight="bold" font-size="5.4" fill="#d8202a" stroke="#8a0a12" stroke-width=".25" textLength="30" lengthAdjust="spacingAndGlyphs">EURO TRUCK</text><circle cx="25.6" cy="10" r="2.6" fill="#2a4ac0" stroke="#e8e8f0" stroke-width=".6"/><path d="M14 8.6H21" stroke="#c8303a" stroke-width="1.2"/></svg>欧洲卡车模拟<br><i>2</i></div>
<div class="di" style="left:-5.0px;top:612.0px"><svg viewBox="0 0 32 32" width="32" height="32"><path d="M2.9 8.6L15.8 17.2V31.2L2.9 23.5Z" fill="#86552f"/><path d="M29.2 8.6L15.8 17.2V31.2L29.2 23.5Z" fill="#633e22"/><path d="M5 17L7.4 18.4V20.6L5 19.2ZM9.6 23.4L12.2 24.8V27L9.6 25.6ZM11 18.6L13 19.8V21.4L11 20.2ZM19.6 24.6L22.4 23V25.2L19.6 26.8ZM24.6 18.4L27 17V19.2L24.6 20.6ZM20 19.6L22 18.4V20L20 21.2Z" fill="#a0734a" opacity=".75"/><path d="M6 22L8 23V24.6L6 23.6ZM24 23.4L26 22.2V23.8L24 25Z" fill="#4a2e18" opacity=".7"/><path d="M15.8 .8L29.2 8.6L15.8 17.2L2.9 8.6Z" fill="#7cc63e"/><path d="M15.8 .8L29.2 8.6L22.6 12.8L9.2 4.8Z" fill="#8ed24a"/><path d="M2.9 8.6L15.8 17.2V20.4L13.6 18.2L11.4 19.6L9 15.6L6.6 16L4.6 12.6L2.9 13Z" fill="#62ac34"/><path d="M29.2 8.6L15.8 17.2V20.4L18.4 18L21 19L23.4 15L26 15.6L27.6 12.2L29.2 12.8Z" fill="#4e9429"/><path d="M10.2 4.6H12V9H10.2Z" fill="#7a5030"/><circle cx="11" cy="2.6" r="3.3" fill="#5cc04a"/><circle cx="9.6" cy="3.6" r="2" fill="#4aae3c"/><circle cx="12.6" cy="1.8" r="1.8" fill="#7ad860"/><path d="M17 6.2L20.4 4.8L22.6 6.2V10.4L19.2 11.8L17 10.4Z" fill="#8a5638"/><path d="M17 6.2L20.4 4.8L22.6 6.2L19.2 7.6Z" fill="#a86e48"/><path d="M21.4 8.4H22.4V10.8H21.4Z" fill="#f4b818"/><path d="M22.6 7.6L28.6 11V14.6L24.4 12.2Z" fill="#5cb8f0" opacity=".9"/><path d="M16.6 1.2L29.2 8.6V11L16.6 3.6Z" fill="#a8dcf4" opacity=".55"/><path d="M16.6 1.2L29.2 8.6" stroke="#9ad25a" stroke-width=".8"/></svg><i>4399</i>我的世<br>界启动器</div>
<div class="di" style="left:46.0px;top:612.0px"><svg viewBox="0 0 32 32" width="32" height="32"><rect x="0" y="0" width="32" height="32" rx="5.5" fill="#fbb92a"/><text x="16.4" y="21.2" text-anchor="middle" font-family="Noto Serif CJK SC,Noto Sans CJK SC,serif" font-weight="900" font-size="14.6" fill="#1c1408" stroke="#1c1408" stroke-width=".9" textLength="28.4" lengthAdjust="spacingAndGlyphs">元气</text></svg>元气桌面</div>
<div class="di" style="left:96.0px;top:612.0px"><svg viewBox="0 0 32 32" width="32" height="32"><circle cx="16" cy="16" r="15.6" fill="#fff"/><path d="M16 16L5.6 5.6A14.6 14.6 0 0 1 26.4 5.6Z" fill="#58c43a"/><path d="M16 16L26.4 5.6A14.6 14.6 0 0 1 26.4 26.4Z" fill="#3a9af0"/><path d="M16 16L26.4 26.4A14.6 14.6 0 0 1 5.6 26.4Z" fill="#fcc41e"/><path d="M16 16L5.6 26.4A14.6 14.6 0 0 1 5.6 5.6Z" fill="#f2646a"/><path d="M9.6 8.6Q16 7 22.4 8.6Q25 9.4 25.6 12L27 19.6Q27.4 22.6 25 22.4L20.6 19.4Q16 16.6 11.4 19.4L7 22.4Q4.6 22.6 5 19.6L6.4 12Q7 9.4 9.6 8.6Z" fill="#fff"/><path d="M5.6 26.4L11.4 21.6Q16 18 20.6 21.6L26.4 26.4A14.6 14.6 0 0 1 5.6 26.4Z" fill="#fcc41e"/><circle cx="11" cy="13.6" r="2" fill="none" stroke="#58c43a" stroke-width="1.1"/><circle cx="21" cy="11.6" r=".8" fill="#f2646a"/><circle cx="21" cy="15.4" r=".8" fill="#3a9af0"/><circle cx="19.2" cy="13.5" r=".8" fill="#fcc41e"/><circle cx="22.8" cy="13.5" r=".8" fill="#58c43a"/></svg>快吧页游大厅</div>
<div class="di" style="left:147.0px;top:612.0px"><svg viewBox="0 0 32 32" width="32" height="32"><defs><linearGradient id="gk" x1="0" y1="0" x2="0" y2="1"><stop offset="0" stop-color="#9a060c"/><stop offset="1" stop-color="#e0161e"/></linearGradient></defs><circle cx="16" cy="16" r="15.4" fill="url(#gk)"/><path d="M16 .6L31 23.6L28 27H4L1 23.6Z" fill="none"/><path d="M16 3.6L28.6 23.4H3.4Z" fill="#18a8ec"/><path d="M16 1.2L18 2.4L4.6 23.4H28L29.6 25.6H2.4L1.6 23.4Z" fill="#b00a10" opacity="0"/><path d="M21.6 13L26.4 22H16.6Z" fill="#d0121a"/><path d="M16 .8L30.4 22.6L29 26H3L1.6 22.6ZM16 5.6L5 22.6H27Z" fill="#c40e16" fill-rule="evenodd" opacity=".0"/></svg><i>GeekTyper</i></div>
<svg class="abs" style="left:626px;top:0" width="36" height="30" viewBox="0 0 36 30"><path d="M13.4 0V6" stroke="#d8ecfc" stroke-width=".7"/><path d="M11.6 6.4L13.4 5L15.4 6.4Z" fill="#6ab8ff"/><path d="M4 17C4 9 8 6 13.4 6S22.8 9 22.8 17V22C22.8 25.6 19 27 13.4 27S4 25.6 4 22Z" fill="#6ab8ff"/><path d="M4.6 22.6L7 24.2L9 22.6L11.2 24.2L13.4 22.6L15.6 24.2L17.8 22.6L19.8 24.2L22.2 22.6C22.4 25.8 19 27 13.4 27S4.4 25.8 4.6 22.6Z" fill="#fff"/><circle cx="27.1" cy="13.4" r="5.3" fill="rgba(120,180,240,.55)" stroke="#e6d232" stroke-width="1.2"/><path d="M24 18.6L23.2 22.6" stroke="#f0cc1e" stroke-width="1.8" stroke-linecap="round"/><path d="M29.6 10.4L30.6 12.4" stroke="#e8f4ff" stroke-width=".8" stroke-linecap="round"/><circle cx="9" cy="15" r="4" fill="#fff"/><circle cx="18" cy="15" r="4" fill="#fff"/><path d="M5.6 11.4L9 10L11 11.4M21.4 11.4L18 10L16 11.4" stroke="#fff" stroke-width="1.2" fill="none" stroke-linecap="round"/><circle cx="9.6" cy="15.2" r="2" fill="#2a1c8e"/><circle cx="17.6" cy="15.2" r="2" fill="#2a1c8e"/><circle cx="10" cy="14.6" r=".6" fill="#6a4cd0"/><circle cx="18" cy="14.6" r=".6" fill="#6a4cd0"/><path d="M12.4 17.4Q13.5 16.6 14.6 17.4L13.5 21Z" fill="#ff7a2a"/></svg>
<svg class="abs" style="left:943.4px;top:0" width="20" height="40" viewBox="0 0 20 40"><path d="M10 0V21" stroke="#9ab4e8" stroke-width=".6"/><path d="M6 20.6Q10 23 14 20.6L19 23.6L17.4 27.6L15.4 26.8V36Q10 37.4 4.6 36V26.8L2.6 27.6L1 23.6Z" fill="#fff"/><path d="M10.3 32L7 28.6Q5.8 25.8 8.2 25.4Q9.8 25.4 10.3 27Q10.8 25.4 12.4 25.4Q14.8 25.8 13.6 28.6Z" fill="#f4483c"/></svg>
<div class="abs" style="left:1218.5px;top:1px;width:37px;height:3.8px;background:#1e3c50;border-radius:1.5px"></div><div class="abs" style="left:1220px;top:1.8px;width:27px;height:2.2px;background:linear-gradient(90deg,#2aa89a 0 3px,transparent 3px 4px,#3ab890 4px 7px,transparent 7px 8px,#6ac06a 8px 11px,transparent 11px 12px,#a8c850 12px 15px,transparent 15px 16px,#d8c040 16px 19px,transparent 19px 20px,#e0a030 20px 23px,transparent 23px 24px,#d88030 24px 27px)"></div><div class="abs" style="left:1247.5px;top:1.8px;width:7px;height:2.2px;background:#7a8088"></div>
<div class="abs" style="left:1142px;top:21px;width:86px;height:22px;border-radius:4.5px;background:#eaf5ff;border:1px solid #2a9cfa;overflow:hidden"><div class="abs" style="left:-1px;top:-1px;width:24.6px;height:22px;background:#0e98ff"></div></div>
<svg class="abs" style="left:1147px;top:26px" width="14" height="12" viewBox="0 0 14 12" fill="none" stroke="#fff" stroke-width="1.7"><circle cx="7" cy="3.6" r="2.5"/><circle cx="3.6" cy="8" r="2.5"/><circle cx="10.4" cy="8" r="2.5"/></svg>
<div class="t" style="left:1174px;top:27px;font-size:8.2px;color:#3a9ef6">拖拽上传</div>
<div class="abs" style="left:1158px;top:109px;width:124px;height:17px;background:#fff;border-radius:3px 0 0 3px"></div><svg class="abs" style="left:1149px;top:107px" width="132" height="22" viewBox="0 0 132 22"><defs><linearGradient id="imeg" x1="0" y1="0" x2="1" y2="1"><stop offset="0" stop-color="#3c66f8"/><stop offset="1" stop-color="#2a90f8"/></linearGradient></defs><path d="M9.7 .9A8.9 8.9 0 1 1 6.4 18L2.4 20.4L3.4 16.2A8.9 8.9 0 0 1 9.7 .9Z" fill="url(#imeg)"/><text x="9.7" y="13.8" text-anchor="middle" font-family="Noto Sans CJK SC,sans-serif" font-weight="bold" font-size="10.4" fill="#fff">王</text><text x="29.3" y="14.6" text-anchor="middle" font-family="Noto Sans CJK SC,sans-serif" font-weight="bold" font-size="10" fill="#2b6fe6">中</text><circle cx="42.2" cy="8.4" r="1.2" fill="none" stroke="#2b6fe6" stroke-width="1"/><path d="M47.4 11.4Q48 13.4 46 14.6" stroke="#2b6fe6" stroke-width="1.5" fill="none" stroke-linecap="round"/><path d="M57.4 11.8L62.6 6.6L64.4 8.4L59.2 13.6L56.8 14.2Z" fill="#2b6fe6"/><path d="M55.4 15.4H64.8" stroke="#2b6fe6" stroke-width="1"/><path d="M72.2 7L78 13.4M78.2 7L72.4 13.4" stroke="#2b6fe6" stroke-width="1.5" stroke-linecap="round"/><circle cx="72.4" cy="13.8" r="1.2" fill="#fff" stroke="#2b6fe6" stroke-width="1"/><circle cx="78" cy="13.8" r="1.2" fill="#fff" stroke="#2b6fe6" stroke-width="1"/><rect x="85.1" y="6.2" width="10.5" height="7.9" rx="1.3" fill="#2b6fe6"/><path d="M86.8 8.4H94M86.8 10.2H94" stroke="#fff" stroke-width=".8" stroke-dasharray="1 .8"/><path d="M88.4 12.2H92.4" stroke="#fff" stroke-width=".8"/><path d="M103.8 6.8Q105.7 8.2 107.6 6.8L110.4 8.4L109.4 10.8L108.4 10.4V15H103V10.4L102 10.8L101 8.4Z" fill="#2b6fe6"/><circle cx="110.6" cy="4.9" r="2.2" fill="#f0482c"/><path d="M121.2 6L122.6 7.2L124.4 6.8L125 8.6L126.6 9.6L126 10.8L126.6 12L125 13L124.4 14.8L122.6 14.4L121.2 15.6L119.8 14.4L118 14.8L117.4 13L115.8 12L116.4 10.8L115.8 9.6L117.4 8.6L118 6.8L119.8 7.2Z" fill="#2b6fe6"/><circle cx="121.2" cy="10.8" r="2" fill="#fff"/></svg>
<div class="abs" style="left:1273.8px;top:173.4px;width:6.2px;height:38.8px;border-radius:3px;background:#02205e;border:.6px solid #2c56b8;overflow:hidden"><div class="abs" style="left:0;top:15.8px;width:6px;height:22.4px;background:repeating-linear-gradient(180deg,#2fae60 0 2.6px,#1c8048 2.6px 4px)"></div></div>
<div id="win">
<div id="tb"></div><div id="tab"></div>
<svg class="abs" style="left:7.5px;top:8px" width="10.5" height="9" viewBox="0 0 13 11"><path d="M0 1.2Q0 .3 1 .3H4.6L6 1.8H12Q13 1.8 13 2.8V9.8Q13 10.8 12 10.8H1Q0 10.8 0 9.8Z" fill="#ffc627"/><path d="M0 3.2H13V9.8Q13 10.8 12 10.8H1Q0 10.8 0 9.8Z" fill="#ffd348"/></svg>
<svg class="abs" style="left:30px;top:8px" width="10" height="12" viewBox="0 0 10 12"><path d="M.3 1.2Q.3 .6 .9 .6H4.2L5 1.6H9.1Q9.7 1.6 9.7 2.2V11.4H.3Z" fill="#f3c649"/><path d="M.3 11.4V2.6H9.7V11.4Z" fill="#ffe28a"/><path d="M.3 2.6H9.7V3.3H.3Z" fill="#ffedb0"/><path d="M.3 10.8H9.7V11.4H.3Z" fill="#eec250"/></svg>
<div class="t" style="left:45px;top:9.7px;font-size:8.6px;color:#222">maps</div>
<svg class="abs" style="left:176px;top:11px" width="6" height="6" viewBox="0 0 6 6"><path d="M.5 .5L5.5 5.5M5.5 .5L.5 5.5" stroke="#555" stroke-width=".9" fill="none"/></svg>
<svg class="abs" style="left:199px;top:10px" width="8" height="8" viewBox="0 0 8 8"><path d="M4 0V8M0 4H8" stroke="#777" stroke-width=".8" fill="none"/></svg>
<svg class="abs" style="left:666px;top:7px" width="126" height="12" viewBox="0 0 126 12" fill="none" stroke="#666" stroke-width=".9"><path d="M2.5 3H8Q10 3 10 5.5T8 8H3.5M4.5 1L2.3 3L4.5 5" /><path d="M30 2.5H37M30 6H37M30 9.5H37"/><path d="M59 6.5H66"/><rect x="87.5" y="2.5" width="7" height="7"/><path d="M116 2L123 9M123 2L116 9"/></svg>
<svg class="abs" style="left:8px;top:31px" width="80" height="12" viewBox="0 0 80 12" fill="none" stroke-width="1"><path d="M10 6H2.5M5.8 2.5L2.3 6L5.8 9.5" stroke="#555"/><path d="M24 6H31.5M28.2 2.5L31.7 6L28.2 9.5" stroke="#bbb"/><path d="M47.5 5L50 7.5L52.5 5" stroke="#555" stroke-width="1.2"/><path d="M72 10V2.5M68.5 5.8L72 2.3L75.5 5.8" stroke="#555"/></svg>
<div class="abs" style="left:87px;top:28px;width:562px;height:20px;border:1px solid #e2e2e2;background:#fff"></div>
<div class="abs" style="left:628px;top:29px;width:1px;height:18px;background:#e3e3e3"></div>
<svg class="abs" style="left:92.4px;top:32.6px" width="8.6" height="10.6" viewBox="0 0 10 12"><path d="M.3 1.2Q.3 .6 .9 .6H4.2L5 1.6H9.1Q9.7 1.6 9.7 2.2V11.4H.3Z" fill="#f3c649"/><path d="M.3 11.4V2.6H9.7V11.4Z" fill="#ffe28a"/><path d="M.3 2.6H9.7V3.3H.3Z" fill="#ffedb0"/><path d="M.3 10.8H9.7V11.4H.3Z" fill="#eec250"/></svg>
<svg class="abs" style="left:106px;top:35px" width="5" height="6" viewBox="0 0 5 6"><path d="M1.2 .7L3.6 3L1.2 5.3" stroke="#999" stroke-width=".8" fill="none"/></svg>
<div class="t" style="left:117px;top:33px;font-size:8.4px;color:#111">此电脑</div>
<svg class="abs" style="left:147px;top:35px" width="5" height="6" viewBox="0 0 5 6"><path d="M1.2 .7L3.6 3L1.2 5.3" stroke="#999" stroke-width=".8" fill="none"/></svg>
<div class="t" style="left:158px;top:33px;font-size:8.4px;color:#111">软件 (D:)</div>
<svg class="abs" style="left:197px;top:35px" width="5" height="6" viewBox="0 0 5 6"><path d="M1.2 .7L3.6 3L1.2 5.3" stroke="#999" stroke-width=".8" fill="none"/></svg>
<div class="t" style="left:207px;top:33px;font-size:8.4px;color:#111">OMSI 2</div>
<svg class="abs" style="left:244px;top:35px" width="5" height="6" viewBox="0 0 5 6"><path d="M1.2 .7L3.6 3L1.2 5.3" stroke="#999" stroke-width=".8" fill="none"/></svg>
<div class="t" style="left:254px;top:33px;font-size:8.4px;color:#111">maps</div>
<svg class="abs" style="left:282px;top:35px" width="5" height="6" viewBox="0 0 5 6"><path d="M1.2 .7L3.6 3L1.2 5.3" stroke="#999" stroke-width=".8" fill="none"/></svg>
<svg class="abs" style="left:615px;top:35px" width="7" height="5" viewBox="0 0 7 5"><path d="M1 1L3.5 3.5L6 1" stroke="#444" stroke-width="1.2" fill="none"/></svg>
<svg class="abs" style="left:635px;top:33px" width="10" height="10" viewBox="0 0 10 10" fill="none" stroke="#444" stroke-width="1.1"><path d="M2.2 2.6A3.6 3.6 0 1 1 1.4 5.2"/><path d="M1 .8V3.3H3.6" stroke-width="1"/></svg>
<div class="abs" style="left:660px;top:28px;width:134px;height:20px;border:1px solid #e2e2e2;background:#fff"></div>
<svg class="abs" style="left:664px;top:33px" width="9" height="9" viewBox="0 0 9 9" fill="none" stroke="#aaa" stroke-width=".9"><circle cx="3.6" cy="3.6" r="2.8"/><path d="M5.7 5.7L8.3 8.3"/></svg>
<div class="t" style="left:680px;top:33px;font-size:8.2px;color:#777">搜索您想要的文件</div>
<div class="abs" style="left:2px;top:296px;width:91px;height:15px;background:#d9d9d9"></div>
<div class="abs" style="left:0;top:50px;width:93px;height:466px;overflow:hidden">
<svg class="abs" style="left:29.5px;top:6.6px" width="9.7" height="12.2" viewBox="0 0 10 12"><path d="M.3 1.2Q.3 .6 .9 .6H4.2L5 1.6H9.1Q9.7 1.6 9.7 2.2V11.4H.3Z" fill="#f3c649"/><path d="M.3 11.4V2.6H9.7V11.4Z" fill="#ffe28a"/><path d="M.3 2.6H9.7V3.3H.3Z" fill="#ffedb0"/><path d="M.3 10.8H9.7V11.4H.3Z" fill="#eec250"/></svg>
<div class="t" style="left:42.8px;top:8.3px;font-size:8.6px;color:#1a1a1a">OMSI 2</div>
<svg class="abs" style="left:34.5px;top:22.6px" width="9.7" height="12.2" viewBox="0 0 10 12"><path d="M.3 1.2Q.3 .6 .9 .6H4.2L5 1.6H9.1Q9.7 1.6 9.7 2.2V11.4H.3Z" fill="#f3c649"/><path d="M.3 11.4V2.6H9.7V11.4Z" fill="#ffe28a"/><path d="M.3 2.6H9.7V3.3H.3Z" fill="#ffedb0"/><path d="M.3 10.8H9.7V11.4H.3Z" fill="#eec250"/></svg>
<div class="t" style="left:47.8px;top:24.3px;font-size:8.6px;color:#1a1a1a">_CommonRes</div>
<svg class="abs" style="left:34.5px;top:38.6px" width="9.7" height="12.2" viewBox="0 0 10 12"><path d="M.3 1.2Q.3 .6 .9 .6H4.2L5 1.6H9.1Q9.7 1.6 9.7 2.2V11.4H.3Z" fill="#f3c649"/><path d="M.3 11.4V2.6H9.7V11.4Z" fill="#ffe28a"/><path d="M.3 2.6H9.7V3.3H.3Z" fill="#ffedb0"/><path d="M.3 10.8H9.7V11.4H.3Z" fill="#eec250"/></svg>
<div class="t" style="left:47.8px;top:40.3px;font-size:8.6px;color:#1a1a1a">_Straßenbahn</div>
<svg class="abs" style="left:34.5px;top:54.6px" width="9.7" height="12.2" viewBox="0 0 10 12"><path d="M.3 1.2Q.3 .6 .9 .6H4.2L5 1.6H9.1Q9.7 1.6 9.7 2.2V11.4H.3Z" fill="#f3c649"/><path d="M.3 11.4V2.6H9.7V11.4Z" fill="#ffe28a"/><path d="M.3 2.6H9.7V3.3H.3Z" fill="#ffedb0"/><path d="M.3 10.8H9.7V11.4H.3Z" fill="#eec250"/></svg>
<div class="t" style="left:47.8px;top:56.3px;font-size:8.6px;color:#1a1a1a">3DMGAME</div>
<svg class="abs" style="left:34.5px;top:70.6px" width="9.7" height="12.2" viewBox="0 0 10 12"><path d="M.3 1.2Q.3 .6 .9 .6H4.2L5 1.6H9.1Q9.7 1.6 9.7 2.2V11.4H.3Z" fill="#f3c649"/><path d="M.3 11.4V2.6H9.7V11.4Z" fill="#ffe28a"/><path d="M.3 2.6H9.7V3.3H.3Z" fill="#ffedb0"/><path d="M.3 10.8H9.7V11.4H.3Z" fill="#eec250"/></svg>
<div class="t" style="left:47.8px;top:72.3px;font-size:8.6px;color:#1a1a1a">Addons</div>
<svg class="abs" style="left:34.5px;top:86.6px" width="9.7" height="12.2" viewBox="0 0 10 12"><path d="M.3 1.2Q.3 .6 .9 .6H4.2L5 1.6H9.1Q9.7 1.6 9.7 2.2V11.4H.3Z" fill="#f3c649"/><path d="M.3 11.4V2.6H9.7V11.4Z" fill="#ffe28a"/><path d="M.3 2.6H9.7V3.3H.3Z" fill="#ffedb0"/><path d="M.3 10.8H9.7V11.4H.3Z" fill="#eec250"/></svg>
<div class="t" style="left:47.8px;top:88.3px;font-size:8.6px;color:#1a1a1a">DEMImporter</div>
<svg class="abs" style="left:34.5px;top:102.6px" width="9.7" height="12.2" viewBox="0 0 10 12"><path d="M.3 1.2Q.3 .6 .9 .6H4.2L5 1.6H9.1Q9.7 1.6 9.7 2.2V11.4H.3Z" fill="#f3c649"/><path d="M.3 11.4V2.6H9.7V11.4Z" fill="#ffe28a"/><path d="M.3 2.6H9.7V3.3H.3Z" fill="#ffedb0"/><path d="M.3 10.8H9.7V11.4H.3Z" fill="#eec250"/></svg>
<div class="t" style="left:47.8px;top:104.3px;font-size:8.6px;color:#1a1a1a">docs</div>
<svg class="abs" style="left:34.5px;top:118.6px" width="9.7" height="12.2" viewBox="0 0 10 12"><path d="M.3 1.2Q.3 .6 .9 .6H4.2L5 1.6H9.1Q9.7 1.6 9.7 2.2V11.4H.3Z" fill="#f3c649"/><path d="M.3 11.4V2.6H9.7V11.4Z" fill="#ffe28a"/><path d="M.3 2.6H9.7V3.3H.3Z" fill="#ffedb0"/><path d="M.3 10.8H9.7V11.4H.3Z" fill="#eec250"/></svg>
<div class="t" style="left:47.8px;top:120.3px;font-size:8.6px;color:#1a1a1a">Drivers</div>
<svg class="abs" style="left:34.5px;top:134.6px" width="9.7" height="12.2" viewBox="0 0 10 12"><path d="M.3 1.2Q.3 .6 .9 .6H4.2L5 1.6H9.1Q9.7 1.6 9.7 2.2V11.4H.3Z" fill="#f3c649"/><path d="M.3 11.4V2.6H9.7V11.4Z" fill="#ffe28a"/><path d="M.3 2.6H9.7V3.3H.3Z" fill="#ffedb0"/><path d="M.3 10.8H9.7V11.4H.3Z" fill="#eec250"/></svg>
<div class="t" style="left:47.8px;top:136.3px;font-size:8.6px;color:#1a1a1a">Fonts</div>
<svg class="abs" style="left:34.5px;top:150.6px" width="9.7" height="12.2" viewBox="0 0 10 12"><path d="M.3 1.2Q.3 .6 .9 .6H4.2L5 1.6H9.1Q9.7 1.6 9.7 2.2V11.4H.3Z" fill="#f3c649"/><path d="M.3 11.4V2.6H9.7V11.4Z" fill="#ffe28a"/><path d="M.3 2.6H9.7V3.3H.3Z" fill="#ffedb0"/><path d="M.3 10.8H9.7V11.4H.3Z" fill="#eec250"/></svg>
<div class="t" style="left:47.8px;top:152.3px;font-size:8.6px;color:#1a1a1a">gsdata</div>
<svg class="abs" style="left:34.5px;top:166.6px" width="9.7" height="12.2" viewBox="0 0 10 12"><path d="M.3 1.2Q.3 .6 .9 .6H4.2L5 1.6H9.1Q9.7 1.6 9.7 2.2V11.4H.3Z" fill="#f3c649"/><path d="M.3 11.4V2.6H9.7V11.4Z" fill="#ffe28a"/><path d="M.3 2.6H9.7V3.3H.3Z" fill="#ffedb0"/><path d="M.3 10.8H9.7V11.4H.3Z" fill="#eec250"/></svg>
<div class="t" style="left:47.8px;top:168.3px;font-size:8.6px;color:#1a1a1a">GUI</div>
<svg class="abs" style="left:34.5px;top:182.6px" width="9.7" height="12.2" viewBox="0 0 10 12"><path d="M.3 1.2Q.3 .6 .9 .6H4.2L5 1.6H9.1Q9.7 1.6 9.7 2.2V11.4H.3Z" fill="#f3c649"/><path d="M.3 11.4V2.6H9.7V11.4Z" fill="#ffe28a"/><path d="M.3 2.6H9.7V3.3H.3Z" fill="#ffedb0"/><path d="M.3 10.8H9.7V11.4H.3Z" fill="#eec250"/></svg>
<div class="t" style="left:47.8px;top:184.3px;font-size:8.6px;color:#1a1a1a">helper</div>
<svg class="abs" style="left:34.5px;top:198.6px" width="9.7" height="12.2" viewBox="0 0 10 12"><path d="M.3 1.2Q.3 .6 .9 .6H4.2L5 1.6H9.1Q9.7 1.6 9.7 2.2V11.4H.3Z" fill="#f3c649"/><path d="M.3 11.4V2.6H9.7V11.4Z" fill="#ffe28a"/><path d="M.3 2.6H9.7V3.3H.3Z" fill="#ffedb0"/><path d="M.3 10.8H9.7V11.4H.3Z" fill="#eec250"/></svg>
<div class="t" style="left:47.8px;top:200.3px;font-size:8.6px;color:#1a1a1a">Humans</div>
<svg class="abs" style="left:34.5px;top:214.6px" width="9.7" height="12.2" viewBox="0 0 10 12"><path d="M.3 1.2Q.3 .6 .9 .6H4.2L5 1.6H9.1Q9.7 1.6 9.7 2.2V11.4H.3Z" fill="#f3c649"/><path d="M.3 11.4V2.6H9.7V11.4Z" fill="#ffe28a"/><path d="M.3 2.6H9.7V3.3H.3Z" fill="#ffedb0"/><path d="M.3 10.8H9.7V11.4H.3Z" fill="#eec250"/></svg>
<div class="t" style="left:47.8px;top:216.3px;font-size:8.6px;color:#1a1a1a">Inputs</div>
<svg class="abs" style="left:34.5px;top:230.6px" width="9.7" height="12.2" viewBox="0 0 10 12"><path d="M.3 1.2Q.3 .6 .9 .6H4.2L5 1.6H9.1Q9.7 1.6 9.7 2.2V11.4H.3Z" fill="#f3c649"/><path d="M.3 11.4V2.6H9.7V11.4Z" fill="#ffe28a"/><path d="M.3 2.6H9.7V3.3H.3Z" fill="#ffedb0"/><path d="M.3 10.8H9.7V11.4H.3Z" fill="#eec250"/></svg>
<div class="t" style="left:47.8px;top:232.3px;font-size:8.6px;color:#1a1a1a">Languages</div>
<svg class="abs" style="left:34.5px;top:246.6px" width="9.7" height="12.2" viewBox="0 0 10 12"><path d="M.3 1.2Q.3 .6 .9 .6H4.2L5 1.6H9.1Q9.7 1.6 9.7 2.2V11.4H.3Z" fill="#f3c649"/><path d="M.3 11.4V2.6H9.7V11.4Z" fill="#ffe28a"/><path d="M.3 2.6H9.7V3.3H.3Z" fill="#ffedb0"/><path d="M.3 10.8H9.7V11.4H.3Z" fill="#eec250"/></svg>
<div class="t" style="left:47.8px;top:248.3px;font-size:8.6px;color:#1a1a1a">maps</div>
<svg class="abs" style="left:34.5px;top:262.6px" width="9.7" height="12.2" viewBox="0 0 10 12"><path d="M.3 1.2Q.3 .6 .9 .6H4.2L5 1.6H9.1Q9.7 1.6 9.7 2.2V11.4H.3Z" fill="#f3c649"/><path d="M.3 11.4V2.6H9.7V11.4Z" fill="#ffe28a"/><path d="M.3 2.6H9.7V3.3H.3Z" fill="#ffedb0"/><path d="M.3 10.8H9.7V11.4H.3Z" fill="#eec250"/></svg>
<div class="t" style="left:47.8px;top:264.3px;font-size:8.6px;color:#1a1a1a">Money</div>
<svg class="abs" style="left:34.5px;top:278.6px" width="9.7" height="12.2" viewBox="0 0 10 12"><path d="M.3 1.2Q.3 .6 .9 .6H4.2L5 1.6H9.1Q9.7 1.6 9.7 2.2V11.4H.3Z" fill="#f3c649"/><path d="M.3 11.4V2.6H9.7V11.4Z" fill="#ffe28a"/><path d="M.3 2.6H9.7V3.3H.3Z" fill="#ffedb0"/><path d="M.3 10.8H9.7V11.4H.3Z" fill="#eec250"/></svg>
<div class="t" style="left:47.8px;top:280.3px;font-size:8.6px;color:#1a1a1a">OMSI 2 - Beta</div>
<svg class="abs" style="left:34.5px;top:294.6px" width="9.7" height="12.2" viewBox="0 0 10 12"><path d="M.3 1.2Q.3 .6 .9 .6H4.2L5 1.6H9.1Q9.7 1.6 9.7 2.2V11.4H.3Z" fill="#f3c649"/><path d="M.3 11.4V2.6H9.7V11.4Z" fill="#ffe28a"/><path d="M.3 2.6H9.7V3.3H.3Z" fill="#ffedb0"/><path d="M.3 10.8H9.7V11.4H.3Z" fill="#eec250"/></svg>
<div class="t" style="left:47.8px;top:296.3px;font-size:8.6px;color:#1a1a1a">option_presets</div>
<svg class="abs" style="left:34.5px;top:310.6px" width="9.7" height="12.2" viewBox="0 0 10 12"><path d="M.3 1.2Q.3 .6 .9 .6H4.2L5 1.6H9.1Q9.7 1.6 9.7 2.2V11.4H.3Z" fill="#f3c649"/><path d="M.3 11.4V2.6H9.7V11.4Z" fill="#ffe28a"/><path d="M.3 2.6H9.7V3.3H.3Z" fill="#ffedb0"/><path d="M.3 10.8H9.7V11.4H.3Z" fill="#eec250"/></svg>
<div class="t" style="left:47.8px;top:312.3px;font-size:8.6px;color:#1a1a1a">plugins</div>
<svg class="abs" style="left:34.5px;top:326.6px" width="9.7" height="12.2" viewBox="0 0 10 12"><path d="M.3 1.2Q.3 .6 .9 .6H4.2L5 1.6H9.1Q9.7 1.6 9.7 2.2V11.4H.3Z" fill="#f3c649"/><path d="M.3 11.4V2.6H9.7V11.4Z" fill="#ffe28a"/><path d="M.3 2.6H9.7V3.3H.3Z" fill="#ffedb0"/><path d="M.3 10.8H9.7V11.4H.3Z" fill="#eec250"/></svg>
<div class="t" style="left:47.8px;top:328.3px;font-size:8.6px;color:#1a1a1a">program</div>
<svg class="abs" style="left:34.5px;top:342.6px" width="9.7" height="12.2" viewBox="0 0 10 12"><path d="M.3 1.2Q.3 .6 .9 .6H4.2L5 1.6H9.1Q9.7 1.6 9.7 2.2V11.4H.3Z" fill="#f3c649"/><path d="M.3 11.4V2.6H9.7V11.4Z" fill="#ffe28a"/><path d="M.3 2.6H9.7V3.3H.3Z" fill="#ffedb0"/><path d="M.3 10.8H9.7V11.4H.3Z" fill="#eec250"/></svg>
<div class="t" style="left:47.8px;top:344.3px;font-size:8.6px;color:#1a1a1a">Sceneryobjects</div>
<svg class="abs" style="left:34.5px;top:358.6px" width="9.7" height="12.2" viewBox="0 0 10 12"><path d="M.3 1.2Q.3 .6 .9 .6H4.2L5 1.6H9.1Q9.7 1.6 9.7 2.2V11.4H.3Z" fill="#f3c649"/><path d="M.3 11.4V2.6H9.7V11.4Z" fill="#ffe28a"/><path d="M.3 2.6H9.7V3.3H.3Z" fill="#ffedb0"/><path d="M.3 10.8H9.7V11.4H.3Z" fill="#eec250"/></svg>
<div class="t" style="left:47.8px;top:360.3px;font-size:8.6px;color:#1a1a1a">Screenshots</div>
<svg class="abs" style="left:34.5px;top:374.6px" width="9.7" height="12.2" viewBox="0 0 10 12"><path d="M.3 1.2Q.3 .6 .9 .6H4.2L5 1.6H9.1Q9.7 1.6 9.7 2.2V11.4H.3Z" fill="#f3c649"/><path d="M.3 11.4V2.6H9.7V11.4Z" fill="#ffe28a"/><path d="M.3 2.6H9.7V3.3H.3Z" fill="#ffedb0"/><path d="M.3 10.8H9.7V11.4H.3Z" fill="#eec250"/></svg>
<div class="t" style="left:47.8px;top:376.3px;font-size:8.6px;color:#1a1a1a">Scripts</div>
<svg class="abs" style="left:34.5px;top:390.6px" width="9.7" height="12.2" viewBox="0 0 10 12"><path d="M.3 1.2Q.3 .6 .9 .6H4.2L5 1.6H9.1Q9.7 1.6 9.7 2.2V11.4H.3Z" fill="#f3c649"/><path d="M.3 11.4V2.6H9.7V11.4Z" fill="#ffe28a"/><path d="M.3 2.6H9.7V3.3H.3Z" fill="#ffedb0"/><path d="M.3 10.8H9.7V11.4H.3Z" fill="#eec250"/></svg>
<div class="t" style="left:47.8px;top:392.3px;font-size:8.6px;color:#1a1a1a">Situations</div>
<svg class="abs" style="left:34.5px;top:406.6px" width="9.7" height="12.2" viewBox="0 0 10 12"><path d="M.3 1.2Q.3 .6 .9 .6H4.2L5 1.6H9.1Q9.7 1.6 9.7 2.2V11.4H.3Z" fill="#f3c649"/><path d="M.3 11.4V2.6H9.7V11.4Z" fill="#ffe28a"/><path d="M.3 2.6H9.7V3.3H.3Z" fill="#ffedb0"/><path d="M.3 10.8H9.7V11.4H.3Z" fill="#eec250"/></svg>
<div class="t" style="left:47.8px;top:408.3px;font-size:8.6px;color:#1a1a1a">Sounds</div>
<svg class="abs" style="left:34.5px;top:422.6px" width="9.7" height="12.2" viewBox="0 0 10 12"><path d="M.3 1.2Q.3 .6 .9 .6H4.2L5 1.6H9.1Q9.7 1.6 9.7 2.2V11.4H.3Z" fill="#f3c649"/><path d="M.3 11.4V2.6H9.7V11.4Z" fill="#ffe28a"/><path d="M.3 2.6H9.7V3.3H.3Z" fill="#ffedb0"/><path d="M.3 10.8H9.7V11.4H.3Z" fill="#eec250"/></svg>
<div class="t" style="left:47.8px;top:424.3px;font-size:8.6px;color:#1a1a1a">Splines</div>
<svg class="abs" style="left:34.5px;top:438.6px" width="9.7" height="12.2" viewBox="0 0 10 12"><path d="M.3 1.2Q.3 .6 .9 .6H4.2L5 1.6H9.1Q9.7 1.6 9.7 2.2V11.4H.3Z" fill="#f3c649"/><path d="M.3 11.4V2.6H9.7V11.4Z" fill="#ffe28a"/><path d="M.3 2.6H9.7V3.3H.3Z" fill="#ffedb0"/><path d="M.3 10.8H9.7V11.4H.3Z" fill="#eec250"/></svg>
<div class="t" style="left:47.8px;top:440.3px;font-size:8.6px;color:#1a1a1a">template</div>
<svg class="abs" style="left:34.5px;top:454.6px" width="9.7" height="12.2" viewBox="0 0 10 12"><path d="M.3 1.2Q.3 .6 .9 .6H4.2L5 1.6H9.1Q9.7 1.6 9.7 2.2V11.4H.3Z" fill="#f3c649"/><path d="M.3 11.4V2.6H9.7V11.4Z" fill="#ffe28a"/><path d="M.3 2.6H9.7V3.3H.3Z" fill="#ffedb0"/><path d="M.3 10.8H9.7V11.4H.3Z" fill="#eec250"/></svg>
<div class="t" style="left:47.8px;top:456.3px;font-size:8.6px;color:#1a1a1a">Texture</div>
</div>
<div class="abs" style="left:93.5px;top:55.5px;width:9px;height:462px;background:#f0f0f0"></div>
<div class="abs" style="left:93.5px;top:198px;width:9px;height:178.6px;background:#cdcdcd"></div>
<svg class="abs" style="left:95px;top:59.5px" width="6" height="4" viewBox="0 0 6 4"><path d="M.6 3.4L3 1L5.4 3.4" stroke="#333" stroke-width="1.1" fill="none"/></svg>
<svg class="abs" style="left:95px;top:508px" width="6" height="4" viewBox="0 0 6 4"><path d="M.6 .6L3 3L5.4 .6" stroke="#333" stroke-width="1.1" fill="none"/></svg>
<div class="t" style="left:117px;top:60px;font-size:8.2px;color:#4c607a">名称</div>
<div class="t" style="left:291px;top:60px;font-size:8.2px;color:#4c607a">修改日期</div>
<div class="t" style="left:387px;top:60px;font-size:8.2px;color:#4c607a">类型</div>
<div class="t" style="left:467px;top:60px;font-size:8.2px;color:#4c607a">大小</div>
<div class="abs" style="left:287px;top:56px;width:1px;height:17px;background:#e6e6e6"></div>
<div class="abs" style="left:383px;top:56px;width:1px;height:17px;background:#e6e6e6"></div>
<div class="abs" style="left:463px;top:56px;width:1px;height:17px;background:#e6e6e6"></div>
<div class="abs" style="left:515px;top:56px;width:1px;height:17px;background:#e6e6e6"></div>
<svg class="abs" style="left:197.4px;top:55px" width="6" height="4" viewBox="0 0 6 4"><path d="M.6 3.2L3 .8L5.4 3.2" stroke="#7a7a7a" stroke-width=".8" fill="none"/></svg>
<div class="abs" style="left:116px;top:78px;width:399px;height:13.5px;background:#cce8ff;"></div>
<svg class="abs" style="left:120px;top:80px" width="8" height="10" viewBox="0 0 10 12"><path d="M.3 1.2Q.3 .6 .9 .6H4.2L5 1.6H9.1Q9.7 1.6 9.7 2.2V11.4H.3Z" fill="#f3c649"/><path d="M.3 11.4V2.6H9.7V11.4Z" fill="#ffe28a"/><path d="M.3 2.6H9.7V3.3H.3Z" fill="#ffedb0"/><path d="M.3 10.8H9.7V11.4H.3Z" fill="#eec250"/></svg>
<div class="t" style="left:131.6px;top:80px;font-size:8.4px;color:#111">Anyang</div>
<div class="t g" style="left:291px;top:80px;font-size:8.2px;">2022/6/4 星期六 20:31</div>
<div class="t g" style="left:387px;top:80px;font-size:8.2px;">文件夹</div>
<div class="abs" style="left:116px;top:92px;width:399px;height:13.5px;background:#cce8ff;"></div>
<svg class="abs" style="left:120px;top:94px" width="8" height="10" viewBox="0 0 10 12"><path d="M.3 1.2Q.3 .6 .9 .6H4.2L5 1.6H9.1Q9.7 1.6 9.7 2.2V11.4H.3Z" fill="#f3c649"/><path d="M.3 11.4V2.6H9.7V11.4Z" fill="#ffe28a"/><path d="M.3 2.6H9.7V3.3H.3Z" fill="#ffedb0"/><path d="M.3 10.8H9.7V11.4H.3Z" fill="#eec250"/></svg>
<div class="t" style="left:131.6px;top:94px;font-size:8.4px;color:#111">Berlin-Spandau</div>
<div class="t g" style="left:291px;top:94px;font-size:8.2px;">2022/8/19 星期五 14:...</div>
<div class="t g" style="left:387px;top:94px;font-size:8.2px;">文件夹</div>
<div class="abs" style="left:116px;top:106px;width:399px;height:13.5px;background:#cce8ff;border:1px solid #99d1ff;"></div>
<svg class="abs" style="left:120px;top:108px" width="8" height="10" viewBox="0 0 10 12"><path d="M.3 1.2Q.3 .6 .9 .6H4.2L5 1.6H9.1Q9.7 1.6 9.7 2.2V11.4H.3Z" fill="#f3c649"/><path d="M.3 11.4V2.6H9.7V11.4Z" fill="#ffe28a"/><path d="M.3 2.6H9.7V3.3H.3Z" fill="#ffedb0"/><path d="M.3 10.8H9.7V11.4H.3Z" fill="#eec250"/></svg>
<div class="t" style="left:131.6px;top:108px;font-size:8.4px;color:#111">Qianjin city</div>
<div class="t g" style="left:291px;top:108px;font-size:8.2px;">2022/8/20 星期六 14:...</div>
<div class="t g" style="left:387px;top:108px;font-size:8.2px;">文件夹</div>
<div class="abs" style="left:116px;top:120px;width:399px;height:13.5px;background:#cce8ff;"></div>
<svg class="abs" style="left:120px;top:122px" width="8" height="10" viewBox="0 0 10 12"><path d="M.3 1.2Q.3 .6 .9 .6H4.2L5 1.6H9.1Q9.7 1.6 9.7 2.2V11.4H.3Z" fill="#f3c649"/><path d="M.3 11.4V2.6H9.7V11.4Z" fill="#ffe28a"/><path d="M.3 2.6H9.7V3.3H.3Z" fill="#ffedb0"/><path d="M.3 10.8H9.7V11.4H.3Z" fill="#eec250"/></svg>
<div class="t" style="left:131.6px;top:122px;font-size:8.4px;color:#111">SJ1816 High FPS</div>
<div class="t g" style="left:291px;top:122px;font-size:8.2px;">2022/8/19 星期五 14:...</div>
<div class="t g" style="left:387px;top:122px;font-size:8.2px;">文件夹</div>
<div class="t" style="left:11px;top:519px;font-size:8.2px;color:#4a4a4a">4 个项目</div>
<div class="t" style="left:56px;top:519px;font-size:8.2px;color:#4a4a4a">已选择 4 个项目</div>
<div class="abs" style="left:767px;top:515px;width:15px;height:16px;background:#cce8ff;border:1px solid #84c4ee"></div>
<svg class="abs" style="left:769px;top:518px" width="11" height="10" viewBox="0 0 11 10"><rect x=".5" y=".5" width="2" height="2" fill="#fff" stroke="#999" stroke-width=".4"/><rect x=".5" y="3.7" width="2" height="2" fill="#fff" stroke="#999" stroke-width=".4"/><rect x=".5" y="6.9" width="2" height="2" fill="#fdd" stroke="#999" stroke-width=".4"/><path d="M4 1.5H6.5M7.5 1.5H10.5M4 4.7H6.5M7.5 4.7H10.5M4 7.9H6.5M7.5 7.9H10.5" stroke="#555" stroke-width=".8"/></svg>
<svg class="abs" style="left:785px;top:519px" width="9" height="8" viewBox="0 0 9 8"><rect x=".3" y=".3" width="8.4" height="7.4" fill="#e8e8e8" stroke="#aaa" stroke-width=".6"/><rect x="1.2" y="1.2" width="6.6" height="2.8" fill="#5a9be0"/><rect x="1.2" y="4" width="6.6" height="2.8" fill="#47607a"/></svg>
</div>
<div id="task"><div id="taskbg"></div>
<svg class="abs" style="left:10.3px;top:8px" width="11.4" height="11.4" viewBox="0 0 12 12" fill="#fff"><path d="M0 1.7L5 1V5.6H0ZM5.8 .9L12 0V5.6H5.8ZM0 6.4H5V11L0 10.3ZM5.8 6.4H12V12L5.8 11.1Z"/></svg>
<svg class="abs" style="left:42.2px;top:6.8px" width="14.4" height="14.4" viewBox="0 0 16 16"><circle cx="4.6" cy="4.4" r="4" fill="#fff"/><circle cx="11.6" cy="4.6" r="4" fill="#fff"/><circle cx="11.4" cy="11.6" r="4" fill="#fff"/><circle cx="4.4" cy="11.4" r="4" fill="#fff"/><circle cx="8" cy="8" r="3" fill="#fff"/><path d="M8.6 0C5.4 3 10.6 5 8 8C5.4 11 10.6 13 7.4 16" fill="none" stroke="#22333d" stroke-width="1.1"/><path d="M16 8.6C13 5.4 11 10.6 8 8C5 5.4 3 10.6 0 7.4" fill="none" stroke="#22333d" stroke-width="1.1"/></svg>
<div class="abs" style="left:67px;top:3px;width:110px;height:23px;background:#f2f2f2"></div>
<div class="abs" style="left:176px;top:3px;width:38px;height:23px;background:#2b8cf4"></div>
<svg class="abs" style="left:70px;top:8px" width="14" height="14" viewBox="0 0 14 14"><text x="7" y="12.4" text-anchor="middle" font-family="Liberation Sans,sans-serif" font-weight="bold" font-size="17" fill="#2e96f8" textLength="10.6" lengthAdjust="spacingAndGlyphs">e</text><path d="M1.6 12.6C-1.4 7 5 -.6 13.4 1C8 1.2 2.6 5.6 1.6 12.6Z" fill="#58b0fa"/></svg>
<svg class="abs" style="left:85px;top:14px" width="4" height="3" viewBox="0 0 4 3"><path d="M0 3L2 0L4 3Z" fill="#888"/></svg>
<div class="t" style="left:93px;top:9px;font-size:8.1px;color:#222">一窗接面包车里过夜</div>
<div class="t" style="left:179px;top:9px;font-size:8.1px;color:#fff">搜索一下</div>
<div class="abs" style="left:511px;top:.8px;width:32px;height:27.2px;background:#47565f"></div>
<div class="abs" style="left:219px;top:26.6px;width:27px;height:1.4px;background:#7ab8ec"></div>
<div class="abs" style="left:416px;top:26.6px;width:27px;height:1.4px;background:#7ab8ec"></div>
<div class="abs" style="left:448px;top:26.6px;width:27px;height:1.4px;background:#7ab8ec"></div>
<div class="abs" style="left:481px;top:26.6px;width:27px;height:1.4px;background:#7ab8ec"></div>
<div class="abs" style="left:511px;top:26.6px;width:32px;height:1.4px;background:#7ab8ec"></div>
<svg class="abs" style="left:222px;top:4px" width="20" height="20" viewBox="0 0 20 20"><path d="M3.3 5.2Q3.3 4.4 4.1 4.4H8.6L10 5.8H17.5Q18.3 5.8 18.3 6.6V16.9H3.3Z" fill="#f2b632"/><path d="M3.3 7.8H18.3V16.9H3.3Z" fill="#fbd563"/><path d="M6 11.2H15.6V16.9H6Z" fill="#3f94e6"/><path d="M8.4 13.8H13.2V16.9H8.4Z" fill="#fbd563"/></svg>
<svg class="abs" style="left:255px;top:4px" width="20" height="20" viewBox="0 0 20 20"><text x="10.6" y="17.6" text-anchor="middle" font-family="Liberation Sans,sans-serif" font-weight="bold" font-size="23" fill="#3ab0f2" textLength="13.6" lengthAdjust="spacingAndGlyphs">e</text><path d="M2.6 16.4C-.6 10.6 4 3.6 12 2.4C16.4 1.8 19.6 3 18.4 6.4" fill="none" stroke="#f0c22e" stroke-width="1.5" stroke-linecap="round"/></svg>
<svg class="abs" style="left:288px;top:4px" width="20" height="20" viewBox="0 0 20 20"><circle cx="10" cy="10.6" r="7.4" fill="#fff"/><circle cx="10" cy="10.6" r="6.5" fill="#5cc832"/><text x="10.2" y="15.6" text-anchor="middle" font-family="Liberation Sans,sans-serif" font-weight="bold" font-size="14" fill="#fff" textLength="9.6" lengthAdjust="spacingAndGlyphs">e</text><path d="M2.6 17.6C1.6 13 6 5 17.6 2C10 4 3.6 10 2.6 17.6Z" fill="#3cbf2a"/></svg>
<svg class="abs" style="left:321px;top:4px" width="20" height="20" viewBox="0 0 20 20"><rect x="2.2" y="3" width="15.7" height="14.8" rx="3.6" fill="#000"/><path d="M15.4 6.8L6 12.8Q4.8 13.6 4.8 12.4M15.4 14L6 8Q4.8 7.2 4.8 8.4" fill="none" stroke="#fff" stroke-width="1.5"/><path d="M4.8 8.6V7.6Q4.8 6.4 6 6.4H12.2Q13.4 6.4 13.4 7.6V8.2M4.8 12.2V13.2Q4.8 14.4 6 14.4H12.2Q13.4 14.4 13.4 13.2V12.6" fill="none" stroke="#fff" stroke-width="1.5"/></svg>
<svg class="abs" style="left:353px;top:4px" width="20" height="20" viewBox="0 0 20 20"><rect x="2.6" y="2.6" width="16" height="16" rx="2.6" fill="#3a7cf4"/><path d="M3.4 6.4C6 6 7.6 6.6 9 7.8C10.6 7.8 12 8.4 13 9.6C14.6 7.4 16 5.6 17.6 4.4C17 6.6 16 8.6 15 10L17.4 9.8C16.4 11.2 15.2 12.2 13.8 12.8C14.2 14.6 14.2 16.2 13.6 17.8C12.8 15.6 11.8 14.2 10.4 13.2C7.8 12.8 6.2 11 6.2 8.8C5.6 7.6 4.8 7 3.4 6.4Z" fill="#fff"/></svg>
<svg class="abs" style="left:386px;top:4px" width="20" height="20" viewBox="0 0 20 20"><path d="M6.6 6.6V5Q6.6 2.6 10 2.6T13.4 5V6.6" fill="none" stroke="#58a8e8" stroke-width="1.2"/><path d="M3 6.4H17L17.6 16.6Q17.6 18 16 18H4Q2.4 18 2.4 16.6Z" fill="#f4f4f4"/><rect x="6.6" y="8.6" width="3" height="3" fill="#f25022"/><rect x="10.4" y="8.6" width="3" height="3" fill="#7fba00"/><rect x="6.6" y="12.4" width="3" height="3" fill="#00a4ef"/><rect x="10.4" y="12.4" width="3" height="3" fill="#ffb900"/></svg>
<svg class="abs" style="left:419px;top:4px" width="20" height="20" viewBox="0 0 20 20"><rect x="2" y="2.4" width="16" height="16.2" rx="3.6" fill="#fff"/><circle cx="10" cy="8" r="2.7" fill="none" stroke="#f0484a" stroke-width="1.6"/><circle cx="7" cy="12.4" r="2.7" fill="none" stroke="#2a98f2" stroke-width="1.6"/><circle cx="13" cy="12.4" r="2.7" fill="none" stroke="#2a98f2" stroke-width="1.6"/><path d="M8.4 18.2H9.6" stroke="#f0484a" stroke-width=".9"/><path d="M10.2 18.2H11.4" stroke="#2a6af2" stroke-width=".9"/></svg>
<svg class="abs" style="left:451px;top:4px" width="20" height="20" viewBox="0 0 20 20"><path d="M5 3L17.6 4.6V13.6L5 12.6Z" fill="#dfe6ec"/><path d="M6 4.2L16.8 5.6V12.6L6 11.6Z" fill="#a8c4dc"/><path d="M7 9.6L9 7.6L10.6 10L12.6 6.6L14 9.6L16 8" stroke="#3a6aa8" stroke-width=".7" fill="none"/><path d="M2 9L9 10V16.6L2 15.4Z" fill="#b8c4cc"/><path d="M3 10.4L8.2 11.2V15.4L3 14.6Z" fill="#7a8a96"/><path d="M9 16L13 16.6V18L9 17.4Z" fill="#c8d0d6"/></svg>
<svg class="abs" style="left:484px;top:4px" width="20" height="20" viewBox="0 0 20 20"><path d="M1.6 3.6Q1.6 2 3.2 2H7.6L9.6 4H16.8Q18.4 4 18.4 5.6V16.4Q18.4 18 16.8 18H3.2Q1.6 18 1.6 16.4Z" fill="#4a9ee8"/><path d="M1.6 13H18.4V15.2H1.6Z" fill="#f58a1e"/><path d="M1.6 15.2H18.4V16.4Q18.4 18 16.8 18H3.2Q1.6 18 1.6 16.4Z" fill="#6cc83c"/><rect x="11" y="4" width="3.4" height="14" fill="#b4641e"/><rect x="10.4" y="12" width="4.6" height="4.4" rx=".6" fill="#f6c86a" stroke="#e09a3a" stroke-width=".5"/></svg>
<svg class="abs" style="left:517px;top:4px" width="20" height="20" viewBox="0 0 20 20"><path d="M2 4.6Q2 3.6 3 3.6H7.6L9.2 5.2H17Q18 5.2 18 6.2V15.8Q18 16.8 17 16.8H3Q2 16.8 2 15.8Z" fill="#f3c446"/><path d="M2 7H18V15.8Q18 16.8 17 16.8H3Q2 16.8 2 15.8Z" fill="#fde08a"/></svg>
<div class="t" style="left:960px;top:4px;width:48px;text-align:center;font-size:8.3px;color:#fff">59℃</div>
<div class="t" style="left:960px;top:15px;width:48px;text-align:center;font-size:8.3px;color:#fff">CPU温度</div>
<svg class="abs" style="left:1027px;top:8px" width="12" height="12" viewBox="0 0 12 12"><rect x=".4" y=".6" width="11.2" height="10.8" rx="2.6" fill="#1a6af2"/><ellipse cx="6" cy="6.2" rx="4.6" ry="3.4" fill="#f4f6fa"/><path d="M2 5Q6 1.6 10 5L9 3.4Q6 1.4 3 3.4Z" fill="#f4f6fa"/><circle cx="4.4" cy="6.2" r=".7" fill="#556"/><circle cx="7.6" cy="6.2" r=".7" fill="#556"/></svg>
<svg class="abs" style="left:1043px;top:8px" width="12" height="12" viewBox="0 0 12 12"><rect x=".6" y=".6" width="10.8" height="10.8" rx="2.4" fill="#fff"/><circle cx="6" cy="4.6" r="1.8" fill="none" stroke="#3a7cf4" stroke-width="1.1"/><circle cx="4" cy="7.6" r="1.8" fill="none" stroke="#e8423a" stroke-width="1.1"/><circle cx="8" cy="7.6" r="1.8" fill="none" stroke="#3a9af4" stroke-width="1.1"/></svg>
<svg class="abs" style="left:1059px;top:8px" width="12" height="12" viewBox="0 0 12 12"><rect x="1.6" y=".6" width="8.8" height="10.8" fill="#e8eef2"/><rect x="2.4" y="1.4" width="7.2" height="5" fill="#2a3a4a"/><rect x="2.4" y="7" width="7.2" height="3.6" fill="#3aa8f0"/></svg>
<svg class="abs" style="left:1075px;top:8px" width="12" height="12" viewBox="0 0 12 12"><rect x=".6" y="1.2" width="10.8" height="9.6" fill="#1a1a1a"/><path d="M2 6C4 3 8 3 10 5C8 4.6 5 5 4 7C5 8.6 8 8.6 10 7.6C8 9.6 4 9.6 2 6Z" fill="#76b900"/></svg>
<svg class="abs" style="left:1090px;top:8px" width="12" height="12" viewBox="0 0 12 12"><circle cx="6" cy="6" r="5.8" fill="#fbe01e"/><path d="M4 .8C7 -.4 11 2 11.6 5C10 5 9 4 8 2.8C7 2 5.6 1.2 4 .8ZM8 11.2C5 12.4 1 10 .4 7C2 7 3 8 4 9.2C5 10 6.4 10.8 8 11.2Z" fill="#2aa83c"/><path d="M6 3.4V8.6M3.4 6H8.6" stroke="#2aa83c" stroke-width="1.5"/></svg>
<svg class="abs" style="left:1107px;top:8px" width="12" height="12" viewBox="0 0 12 12"><path d="M1 1H9V7H1Z" fill="none" stroke="#fff" stroke-width=".9"/><path d="M5 7V9.6M3 9.8H11M8 8H11.4V11.4H8Z" stroke="#fff" stroke-width=".9" fill="#1d2932"/></svg>
<svg class="abs" style="left:1122px;top:8px" width="12" height="12" viewBox="0 0 12 12"><path d="M.8 4.4H3L6 1.6V10.4L3 7.6H.8Z" fill="none" stroke="#fff" stroke-width=".8"/><path d="M7.6 4.2Q8.6 6 7.6 7.8M9.2 2.8Q11 6 9.2 9.2" fill="none" stroke="#fff" stroke-width=".8"/></svg>
<div class="t" style="left:1139px;top:8px;font-size:9.4px;font-weight:bold;color:#fff">中</div>
<svg class="abs" style="left:1158px;top:8px" width="12" height="12" viewBox="0 0 12 12"><rect x=".4" y=".4" width="11.2" height="11.2" rx="2.8" fill="#2a78f4"/><text x="6" y="9.4" text-anchor="middle" font-family="Noto Sans CJK SC,sans-serif" font-weight="bold" font-size="8" fill="#fff">王</text></svg>
<div class="t" style="left:1193.6px;top:14.6px;font-size:8.7px;color:#e8ecf4">2022/8/20</div>
<div class="abs" style="left:1259px;top:12px;width:11px;height:7px;background:#ecba3e"></div><div class="abs" style="left:1277.4px;top:0;width:1px;height:28px;background:#4a5674"></div>
<svg class="abs" style="left:1186px;top:-5.6px" width="90" height="26" viewBox="0 0 90 26"><text x="45.2" y="19.4" text-anchor="middle" font-family="DejaVu Sans Mono,Liberation Mono,monospace" font-size="18.6" fill="#fff" stroke="#000" stroke-width="3.2" stroke-linejoin="miter" paint-order="stroke" textLength="77" lengthAdjust="spacingAndGlyphs">@Vefans</text></svg>
</div>
</div>
</body></html>
